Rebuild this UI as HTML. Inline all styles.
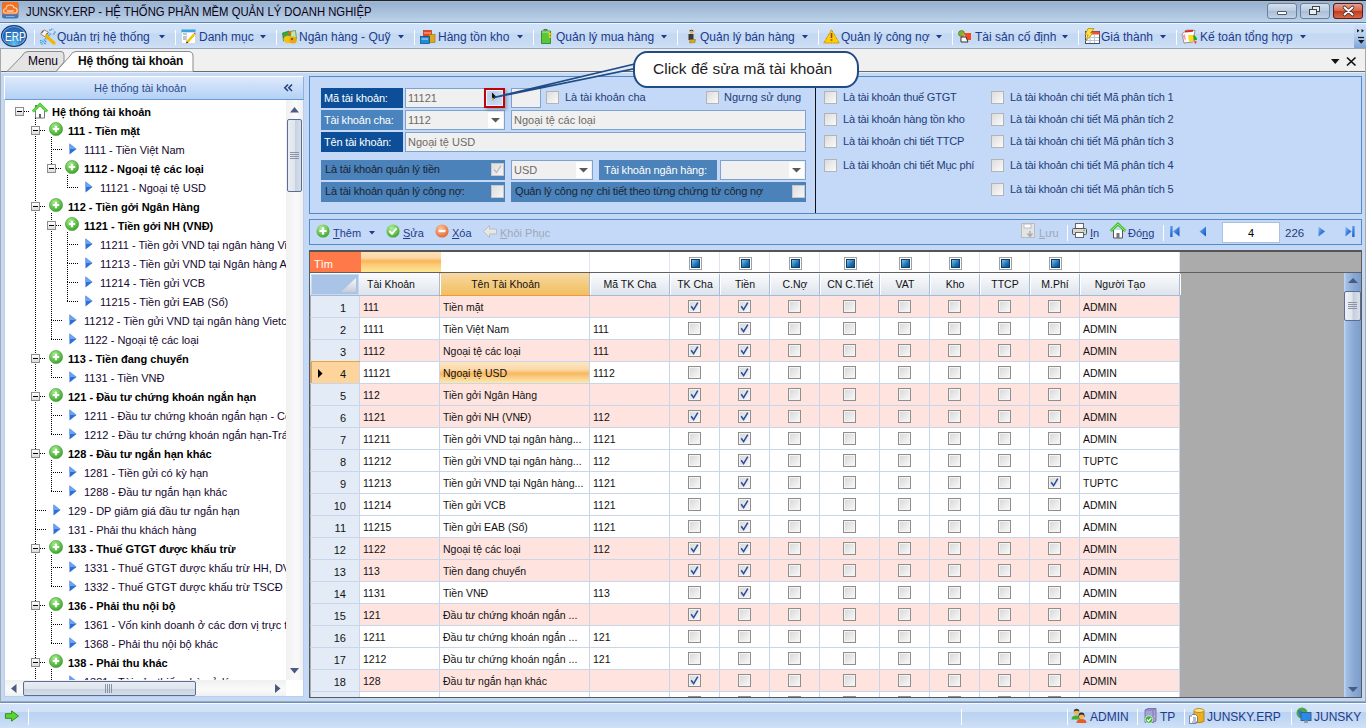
<!DOCTYPE html><html><head><meta charset="utf-8"><style>
*{margin:0;padding:0;box-sizing:border-box}
html,body{width:1366px;height:728px;overflow:hidden;background:#c3d9f6;font-family:"Liberation Sans",sans-serif;font-size:11px;color:#000}
.a{position:absolute}
.t{position:absolute;white-space:nowrap;line-height:1}
svg{position:absolute;overflow:visible}
</style></head><body><div class="a" style="left:0px;top:0px;width:1366px;height:1px;background:#25211f"></div>
<div class="a" style="left:0px;top:1px;width:1366px;height:21px;background:linear-gradient(#a0bbd8 0px,#98b2d1 2px,#bcd2e9 21px)"></div>
<div class="a" style="left:0px;top:22px;width:1366px;height:1px;background:#5a84b6"></div>
<svg style="left:2px;top:2px" width="17" height="17" viewBox="0 0 17 17"><rect x="0" y="0" width="16.5" height="16.5" rx="2.5" fill="#3a78c0"/><path d="M0 2.5 Q0 0 2.5 0 H14 Q16.5 0 16.5 2.5 V12.5 H0 Z" fill="#f27022"/><path d="M3.8 11 Q1.5 11 1.6 8.8 Q1.8 6.6 4 6.8 Q4.3 3 8 3 Q11.2 2.8 12 5.8 Q15 5.6 15.2 8.5 Q15.2 11 12.8 11 Z" fill="none" stroke="#fde0c8" stroke-width="1.1"/><path d="M4.5 8.5 H12 M5 9.5 H11.5" stroke="#fbc8a8" stroke-width="0.8"/><path d="M4 14.5 H12.5" stroke="#9cc0ea" stroke-width="0.8"/></svg>
<div class="t" style="left:26px;top:5px;font-size:13px;transform:scaleX(0.868);transform-origin:0 0;color:#0a0014">JUNSKY.ERP - HỆ THỐNG PHẦN MỀM QUẢN LÝ DOANH NGHIỆP</div>
<div class="a" style="left:1267px;top:3px;width:30px;height:16px;border:1px solid #6d7f98;border-radius:3px;background:linear-gradient(#d4e0ee,#b9cbe0 50%,#a9bdd6 51%,#c2d3e6)"></div>
<div class="a" style="left:1277px;top:11px;width:10px;height:4px;background:#fff;border:1px solid #4a5568;border-radius:1px"></div>
<div class="a" style="left:1300px;top:3px;width:30px;height:16px;border:1px solid #6d7f98;border-radius:3px;background:linear-gradient(#d4e0ee,#b9cbe0 50%,#a9bdd6 51%,#c2d3e6)"></div>
<div class="a" style="left:1312px;top:6px;width:8px;height:6px;border:1.5px solid #444;background:#e8eef6"></div><div class="a" style="left:1309px;top:9px;width:8px;height:6px;border:1.5px solid #444;background:#e8eef6"></div>
<div class="a" style="left:1333px;top:3px;width:30px;height:16px;border:1px solid #6d7f98;border-radius:3px;background:linear-gradient(#e8a090,#d5624a 50%,#c23a1c 51%,#d86a45)"></div>
<svg style="left:1343px;top:6px" width="11" height="10"><path d="M1.5 1.5 L9.5 8.5 M9.5 1.5 L1.5 8.5" stroke="#3a2a2a" stroke-width="3.6" stroke-linecap="round"/><path d="M1.5 1.5 L9.5 8.5 M9.5 1.5 L1.5 8.5" stroke="#fff" stroke-width="2" stroke-linecap="round"/></svg>
<div class="a" style="left:1333px;top:3px;width:30px;height:16px;border:1px solid #5a1a18;border-radius:3px"></div>
<div class="a" style="left:0px;top:23px;width:1366px;height:1px;background:#eef5fd"></div>
<div class="a" style="left:0px;top:24px;width:1366px;height:24px;background:linear-gradient(#d2e3f8 0px,#cddff6 9px,#c3d8f2 10px,#c8dbf3 20px,#d2e2f7 24px)"></div>
<div class="a" style="left:0px;top:48px;width:1366px;height:1px;background:#9aa6b6"></div>
<div class="a" style="left:1px;top:25px;width:26px;height:22px;border-radius:50%;background:radial-gradient(ellipse at 50% 95%,#5cc8f4 0%,#2f78c4 45%,#1a4a94 100%);border:1px solid #1a3a70;box-shadow:inset 0 0 0 1px #7aa6dc"></div>
<div class="t" style="left:5px;top:31px;font-size:12.5px;color:#fff;transform:scaleX(0.8);transform-origin:0 0">ERP</div>
<div class="a" style="left:34px;top:30px;width:1px;height:15px;background:#fafcff"></div>
<div class="t" style="left:57px;top:31px;font-size:12px;color:#1c3b8c">Quản trị hệ thống</div>
<svg style="left:159px;top:35px" width="6" height="4"><path d="M0 0 H6 L3 3.5 Z" fill="#1c3b8c"/></svg>
<div class="a" style="left:175px;top:30px;width:1px;height:15px;background:#fafcff"></div>
<div class="t" style="left:199px;top:31px;font-size:12px;color:#1c3b8c">Danh mục</div>
<svg style="left:260px;top:35px" width="6" height="4"><path d="M0 0 H6 L3 3.5 Z" fill="#1c3b8c"/></svg>
<div class="a" style="left:276px;top:30px;width:1px;height:15px;background:#fafcff"></div>
<div class="t" style="left:299px;top:31px;font-size:12px;color:#1c3b8c">Ngân hàng - Quỹ</div>
<svg style="left:398px;top:35px" width="6" height="4"><path d="M0 0 H6 L3 3.5 Z" fill="#1c3b8c"/></svg>
<div class="a" style="left:414px;top:30px;width:1px;height:15px;background:#fafcff"></div>
<div class="t" style="left:438px;top:31px;font-size:12px;color:#1c3b8c">Hàng tồn kho</div>
<svg style="left:517px;top:35px" width="6" height="4"><path d="M0 0 H6 L3 3.5 Z" fill="#1c3b8c"/></svg>
<div class="a" style="left:533px;top:30px;width:1px;height:15px;background:#fafcff"></div>
<div class="t" style="left:556px;top:31px;font-size:12px;color:#1c3b8c">Quản lý mua hàng</div>
<svg style="left:661px;top:35px" width="6" height="4"><path d="M0 0 H6 L3 3.5 Z" fill="#1c3b8c"/></svg>
<div class="a" style="left:677px;top:30px;width:1px;height:15px;background:#fafcff"></div>
<div class="t" style="left:700px;top:31px;font-size:12px;color:#1c3b8c">Quản lý bán hàng</div>
<svg style="left:802px;top:35px" width="6" height="4"><path d="M0 0 H6 L3 3.5 Z" fill="#1c3b8c"/></svg>
<div class="a" style="left:818px;top:30px;width:1px;height:15px;background:#fafcff"></div>
<div class="t" style="left:841px;top:31px;font-size:12px;color:#1c3b8c">Quản lý công nợ</div>
<svg style="left:936px;top:35px" width="6" height="4"><path d="M0 0 H6 L3 3.5 Z" fill="#1c3b8c"/></svg>
<div class="a" style="left:952px;top:30px;width:1px;height:15px;background:#fafcff"></div>
<div class="t" style="left:975px;top:31px;font-size:12px;color:#1c3b8c">Tài sản cố định</div>
<svg style="left:1062px;top:35px" width="6" height="4"><path d="M0 0 H6 L3 3.5 Z" fill="#1c3b8c"/></svg>
<div class="a" style="left:1078px;top:30px;width:1px;height:15px;background:#fafcff"></div>
<div class="t" style="left:1101px;top:31px;font-size:12px;color:#1c3b8c">Giá thành</div>
<svg style="left:1160px;top:35px" width="6" height="4"><path d="M0 0 H6 L3 3.5 Z" fill="#1c3b8c"/></svg>
<div class="a" style="left:1176px;top:30px;width:1px;height:15px;background:#fafcff"></div>
<div class="t" style="left:1200px;top:31px;font-size:12px;color:#1c3b8c">Kế toán tổng hợp</div>
<svg style="left:1300px;top:35px" width="6" height="4"><path d="M0 0 H6 L3 3.5 Z" fill="#1c3b8c"/></svg>
<svg style="left:40px;top:28px" width="16" height="17" viewBox="0 0 16 17"><path d="M2.5 14 L11 5" stroke="#3aa0f0" stroke-width="2" stroke-dasharray="1.2 0.9"/><path d="M9.5 2.5 Q11 0.8 13.5 1.5 M14.8 3.5 Q15 6 12.5 6.5" fill="none" stroke="#2a96ea" stroke-width="1.6" stroke-dasharray="1.2 0.8"/><path d="M1 12 Q0 15 2.5 16.2 M4.5 16 Q6 14 5.5 12.5" fill="none" stroke="#2a96ea" stroke-width="1.6" stroke-dasharray="1.2 0.8"/><path d="M6.5 8.5 L14 15" stroke="#f2b600" stroke-width="3.2" stroke-linecap="round"/><path d="M0.5 6 L4 1.8 L8.5 4.2 L5 8.8 Z" fill="#f4f4f4" stroke="#7a7a7a" stroke-width="0.8"/><path d="M1.5 4.8 L3.5 2.6" stroke="#8a4a3a" stroke-width="1.2"/><path d="M7.5 4.8 L5.5 7.8" stroke="#333" stroke-width="1"/><path d="M5.5 7 L8 9.5" stroke="#f2b600" stroke-width="3"/></svg>
<svg style="left:181px;top:29px" width="16" height="15" viewBox="0 0 16 15"><rect x="0.5" y="0.5" width="14" height="14" fill="#fff" stroke="#c4ccd8" stroke-width="0.6"/><rect x="0.5" y="0.5" width="14" height="2.8" fill="#3aa2e0"/><path d="M2 5 H5 M2 8 H5 M2 10 H5" stroke="#7a8696" stroke-width="1"/><path d="M5.5 3 V14" stroke="#cbd6e4"/><path d="M6 13.5 L13 5.5" stroke="#f2c400" stroke-width="2.6"/><path d="M12.5 5 L14 3.5 L14.5 5.5 Z" fill="#e02020"/><path d="M5.5 14 L6.5 12.8" stroke="#222" stroke-width="1.2"/></svg>
<svg style="left:282px;top:30px" width="16" height="14" viewBox="0 0 16 14"><path d="M0.5 3 L7 1 L8 9 L1.5 11 Z" fill="#3ca832" stroke="#1f6e1f" stroke-width="0.6"/><path d="M8 1.5 L13.5 0.5 L14.5 9 L9 10 Z" fill="#bfe8a8" stroke="#2a7a2a" stroke-width="0.6"/><path d="M5.5 2 L9.5 1 L9 6 Z" fill="#e86a10"/><ellipse cx="6" cy="9.5" rx="4.5" ry="3.8" fill="#f2c21a"/><ellipse cx="11" cy="10" rx="3.8" ry="3.6" fill="#e8a810"/><circle cx="10" cy="9" r="1" fill="#7a3a0a"/></svg>
<svg style="left:420px;top:30px" width="16" height="14" viewBox="0 0 16 14"><rect x="3.5" y="0.5" width="8" height="6" fill="#f0401a" stroke="#a82a10" stroke-width="0.6"/><path d="M4 3 H11" stroke="#ffc0b0"/><rect x="9" y="4.5" width="6" height="8" fill="#e0a818" stroke="#9a7010" stroke-width="0.6"/><rect x="0.5" y="6.5" width="9" height="7" fill="#1e8ae0" stroke="#0a4a6a" stroke-width="0.7"/><path d="M1.5 9 H8" stroke="#bfe6ff"/></svg>
<svg style="left:541px;top:29px" width="11" height="15" viewBox="0 0 11 15"><rect x="2.5" y="0" width="4" height="1.5" fill="#666"/><path d="M0.5 2 H9.5 V14.5 H0.5 Z" fill="#58c838" stroke="#2a7a1a" stroke-width="0.8"/><path d="M1 3 H9" stroke="#b8f0a0"/><path d="M7.5 3.5 L10.5 5 L8 6.5 L10 8 L8 9" fill="#f8d820" stroke="#f0c000" stroke-width="0.8"/></svg>
<svg style="left:688px;top:30px" width="9" height="14" viewBox="0 0 9 14"><circle cx="3.5" cy="2" r="1.8" fill="#f0b040"/><path d="M1.5 0.8 Q3.5 -0.5 5.5 1" stroke="#333" fill="none" stroke-width="1"/><rect x="0.5" y="4" width="5" height="6" fill="#3a3a3a"/><path d="M2 9.5 H7.5 L7 12.5 L1.5 13 Z" fill="#e0a810" stroke="#8a6a10" stroke-width="0.5"/></svg>
<svg style="left:823px;top:29px" width="17" height="15" viewBox="0 0 17 15"><path d="M8.5 0.8 L16.2 14 H0.8 Z" fill="#ffd000" stroke="#d07a00" stroke-width="1" stroke-dasharray="1 0.6"/><path d="M8.5 4 V9" stroke="#8a4a20" stroke-width="1.6"/><ellipse cx="8.5" cy="11" rx="1.2" ry="0.8" fill="#8a3a10"/></svg>
<svg style="left:958px;top:30px" width="14" height="13" viewBox="0 0 14 13"><circle cx="3.5" cy="3.5" r="3" fill="#80b030" stroke="#3a6a10" stroke-width="0.6"/><path d="M6 3 H13 V10 H9 Z" fill="#f04a20"/><path d="M3 7 L8 7 L10 12 L3 12 Z" fill="#fff" stroke="#222" stroke-width="0.9"/><circle cx="5" cy="4.5" r="1.3" fill="#d89a20"/></svg>
<svg style="left:1083px;top:28px" width="17" height="16" viewBox="0 0 17 16"><rect x="2.5" y="3.5" width="14" height="12" fill="#fff" stroke="#2a3e58" stroke-width="0.9"/><rect x="2.5" y="3.5" width="14" height="3" fill="#f05030"/><path d="M7 6.5 V15 M11.5 6.5 V15 M2.5 9.5 H16 M2.5 12.5 H16" stroke="#b8c4d8"/><path d="M5 0.5 H11 L7.5 5 H10 L3 13 L5 7 H2 Z" fill="#ffe040" stroke="#b08000" stroke-width="0.7"/></svg>
<svg style="left:1181px;top:29px" width="17" height="15" viewBox="0 0 17 15"><path d="M1 5 L6 1 L14 1.5 L12 13 L3 14 Z" fill="#fff" stroke="#555" stroke-width="0.6"/><path d="M4 2.5 L12 1.8" stroke="#e02a20" stroke-width="2"/><path d="M1 7 L4 5 L5 12 Z" fill="#ff9a9a"/><path d="M7 6 L13 6 L12 13 L8 13 Z" fill="#ffd820"/><path d="M12 6 Q16 7 16 11 L13 11 Z" fill="#20a820"/><path d="M13 11 L16 13 L14 15 Z" fill="#f04020"/></svg>
<div class="a" style="left:1354px;top:24px;width:12px;height:24px;background:linear-gradient(#d0e2f8,#b4cdee 50%,#7ea4d8)"></div>
<svg style="left:1357px;top:29px" width="9" height="16"><path d="M0 0 L2.5 1.8 L0 3.6 Z M4.5 0 L7 1.8 L4.5 3.6 Z" fill="#1a1a1a"/><path d="M1 8.5 H7" stroke="#1a1a1a" stroke-width="1.2"/><path d="M1 11 H7.5 L4.2 14.8 Z" fill="#1a1a1a"/></svg>
<div class="a" style="left:0px;top:49px;width:1366px;height:22px;background:#f0f0f0"></div>
<div class="a" style="left:0px;top:71px;width:1366px;height:1px;background:#6b6b6b"></div>
<div class="a" style="left:0px;top:72px;width:1366px;height:1px;background:#e4ecf6"></div>
<svg style="left:0px;top:50px" width="200" height="22"><path d="M7 21.5 L22 6 Q24 1.5 28 1.5 L61 1.5 Q64 1.5 64 5 L64 12 L56 21.5 Z" fill="#e4e4e4" stroke="#8a8a8a"/><path d="M56 21.5 L70 6 Q72 1.5 76 1.5 L188 1.5 Q193 1.5 193 6 L193 21.5" fill="#fff" stroke="#8a8a8a"/></svg>
<div class="t" style="left:28px;top:55px;font-size:12px;color:#0a0014">Menu</div>
<div class="t" style="left:78px;top:55px;font-size:12px;font-weight:bold;letter-spacing:-0.15px;color:#0a0a0a">Hệ thống tài khoản</div>
<svg style="left:1331px;top:59px" width="10" height="6"><path d="M0 0 H8.5 L4.25 5 Z" fill="#111"/></svg>
<svg style="left:1346px;top:57px" width="11" height="9"><path d="M1 0.5 L9.5 8.5 M9.5 0.5 L1 8.5" stroke="#111" stroke-width="1.7"/></svg>
<div class="a" style="left:0px;top:49px;width:1px;height:653px;background:#a8a8a8"></div>
<div class="a" style="left:1365px;top:49px;width:1px;height:653px;background:#a8a8a8"></div>
<div class="a" style="left:4px;top:76px;width:300px;height:24px;background:linear-gradient(#dde9fb,#b4d1f6);border-top:1px solid #fff;border-left:1px solid #fff;border-bottom:1px solid #6b9ad3;border-right:1px solid #8db2e0"></div>
<div class="t" style="left:94px;top:83px;font-size:11px;color:#2a4c8c">Hệ thống tài khoản</div>
<svg style="left:284px;top:84px" width="9" height="8"><path d="M4 0.5 L0.8 3.8 L4 7 M8 0.5 L4.8 3.8 L8 7" fill="none" stroke="#24437e" stroke-width="1.6"/></svg>
<div class="a" style="left:4px;top:100px;width:300px;height:597px;background:#fff;border-left:1px solid #b8d0ee;border-right:1px solid #b8d0ee;border-bottom:1px solid #b8d0ee"></div>
<div class="a" style="left:286px;top:100px;width:17px;height:580px;background:linear-gradient(90deg,#f0f0f0,#fafafa 60%,#f0f0f0)"></div>
<svg style="left:290px;top:107px" width="10" height="6"><path d="M0 5.5 L4.5 0 L9 5.5 Z" fill="#4b5a80"/></svg>
<svg style="left:290px;top:668px" width="10" height="6"><path d="M0 0 L4.5 5.5 L9 0 Z" fill="#4b5a80"/></svg>
<div class="a" style="left:287px;top:119px;width:15px;height:73px;border:1px solid #5b6d95;border-radius:2px;background:linear-gradient(90deg,#e9edf3,#dfe5ee 50%,#c8d2df 55%,#d6dee8)"></div>
<div class="a" style="left:290px;top:152px;width:9px;height:1px;background:#8a94a6"></div>
<div class="a" style="left:290px;top:154px;width:9px;height:1px;background:#8a94a6"></div>
<div class="a" style="left:290px;top:156px;width:9px;height:1px;background:#8a94a6"></div>
<div class="a" style="left:290px;top:158px;width:9px;height:1px;background:#8a94a6"></div>
<div class="a" style="left:5px;top:680px;width:281px;height:16px;background:linear-gradient(#f0f0f0,#fafafa 60%,#f0f0f0)"></div>
<svg style="left:11px;top:684px" width="6" height="10"><path d="M5.5 0 L0 4.5 L5.5 9 Z" fill="#4b5a80"/></svg>
<svg style="left:275px;top:684px" width="6" height="10"><path d="M0 0 L5.5 4.5 L0 9 Z" fill="#4b5a80"/></svg>
<div class="a" style="left:23px;top:681px;width:173px;height:15px;border:1px solid #5b6d95;border-radius:2px;background:linear-gradient(#e9edf3,#dfe5ee 50%,#c8d2df 55%,#d6dee8)"></div>
<div class="a" style="left:105px;top:684px;width:1px;height:9px;background:#8a94a6"></div>
<div class="a" style="left:107px;top:684px;width:1px;height:9px;background:#8a94a6"></div>
<div class="a" style="left:109px;top:684px;width:1px;height:9px;background:#8a94a6"></div>
<div class="a" style="left:111px;top:684px;width:1px;height:9px;background:#8a94a6"></div>
<div class="a" style="left:286px;top:680px;width:17px;height:16px;background:#fff"></div>
<div class="a" style="left:5px;top:100px;width:281px;height:580px;overflow:hidden">
<div class="a" style="left:19px;top:11px;width:6px;height:1px;background-image:repeating-linear-gradient(90deg,#000 0 1px,transparent 1px 2px)"></div>
<div class="a" style="left:31px;top:30px;width:10px;height:1px;background-image:repeating-linear-gradient(90deg,#000 0 1px,transparent 1px 2px)"></div>
<div class="a" style="left:30px;top:30px;width:1px;height:77px;background-image:repeating-linear-gradient(180deg,#000 0 1px,transparent 1px 2px)"></div>
<div class="a" style="left:46px;top:49px;width:11px;height:1px;background-image:repeating-linear-gradient(90deg,#000 0 1px,transparent 1px 2px)"></div>
<div class="a" style="left:46px;top:49px;width:1px;height:20px;background-image:repeating-linear-gradient(180deg,#000 0 1px,transparent 1px 2px)"></div>
<div class="a" style="left:47px;top:68px;width:10px;height:1px;background-image:repeating-linear-gradient(90deg,#000 0 1px,transparent 1px 2px)"></div>
<div class="a" style="left:62px;top:87px;width:11px;height:1px;background-image:repeating-linear-gradient(90deg,#000 0 1px,transparent 1px 2px)"></div>
<div class="a" style="left:31px;top:106px;width:10px;height:1px;background-image:repeating-linear-gradient(90deg,#000 0 1px,transparent 1px 2px)"></div>
<div class="a" style="left:30px;top:106px;width:1px;height:153px;background-image:repeating-linear-gradient(180deg,#000 0 1px,transparent 1px 2px)"></div>
<div class="a" style="left:47px;top:125px;width:10px;height:1px;background-image:repeating-linear-gradient(90deg,#000 0 1px,transparent 1px 2px)"></div>
<div class="a" style="left:46px;top:125px;width:1px;height:96px;background-image:repeating-linear-gradient(180deg,#000 0 1px,transparent 1px 2px)"></div>
<div class="a" style="left:62px;top:144px;width:11px;height:1px;background-image:repeating-linear-gradient(90deg,#000 0 1px,transparent 1px 2px)"></div>
<div class="a" style="left:62px;top:144px;width:1px;height:20px;background-image:repeating-linear-gradient(180deg,#000 0 1px,transparent 1px 2px)"></div>
<div class="a" style="left:62px;top:163px;width:11px;height:1px;background-image:repeating-linear-gradient(90deg,#000 0 1px,transparent 1px 2px)"></div>
<div class="a" style="left:62px;top:163px;width:1px;height:20px;background-image:repeating-linear-gradient(180deg,#000 0 1px,transparent 1px 2px)"></div>
<div class="a" style="left:62px;top:182px;width:11px;height:1px;background-image:repeating-linear-gradient(90deg,#000 0 1px,transparent 1px 2px)"></div>
<div class="a" style="left:62px;top:182px;width:1px;height:20px;background-image:repeating-linear-gradient(180deg,#000 0 1px,transparent 1px 2px)"></div>
<div class="a" style="left:62px;top:201px;width:11px;height:1px;background-image:repeating-linear-gradient(90deg,#000 0 1px,transparent 1px 2px)"></div>
<div class="a" style="left:46px;top:220px;width:11px;height:1px;background-image:repeating-linear-gradient(90deg,#000 0 1px,transparent 1px 2px)"></div>
<div class="a" style="left:46px;top:220px;width:1px;height:20px;background-image:repeating-linear-gradient(180deg,#000 0 1px,transparent 1px 2px)"></div>
<div class="a" style="left:46px;top:239px;width:11px;height:1px;background-image:repeating-linear-gradient(90deg,#000 0 1px,transparent 1px 2px)"></div>
<div class="a" style="left:31px;top:258px;width:10px;height:1px;background-image:repeating-linear-gradient(90deg,#000 0 1px,transparent 1px 2px)"></div>
<div class="a" style="left:30px;top:258px;width:1px;height:39px;background-image:repeating-linear-gradient(180deg,#000 0 1px,transparent 1px 2px)"></div>
<div class="a" style="left:46px;top:277px;width:11px;height:1px;background-image:repeating-linear-gradient(90deg,#000 0 1px,transparent 1px 2px)"></div>
<div class="a" style="left:31px;top:296px;width:10px;height:1px;background-image:repeating-linear-gradient(90deg,#000 0 1px,transparent 1px 2px)"></div>
<div class="a" style="left:30px;top:296px;width:1px;height:58px;background-image:repeating-linear-gradient(180deg,#000 0 1px,transparent 1px 2px)"></div>
<div class="a" style="left:46px;top:315px;width:11px;height:1px;background-image:repeating-linear-gradient(90deg,#000 0 1px,transparent 1px 2px)"></div>
<div class="a" style="left:46px;top:315px;width:1px;height:20px;background-image:repeating-linear-gradient(180deg,#000 0 1px,transparent 1px 2px)"></div>
<div class="a" style="left:46px;top:334px;width:11px;height:1px;background-image:repeating-linear-gradient(90deg,#000 0 1px,transparent 1px 2px)"></div>
<div class="a" style="left:31px;top:353px;width:10px;height:1px;background-image:repeating-linear-gradient(90deg,#000 0 1px,transparent 1px 2px)"></div>
<div class="a" style="left:30px;top:353px;width:1px;height:58px;background-image:repeating-linear-gradient(180deg,#000 0 1px,transparent 1px 2px)"></div>
<div class="a" style="left:46px;top:372px;width:11px;height:1px;background-image:repeating-linear-gradient(90deg,#000 0 1px,transparent 1px 2px)"></div>
<div class="a" style="left:46px;top:372px;width:1px;height:20px;background-image:repeating-linear-gradient(180deg,#000 0 1px,transparent 1px 2px)"></div>
<div class="a" style="left:46px;top:391px;width:11px;height:1px;background-image:repeating-linear-gradient(90deg,#000 0 1px,transparent 1px 2px)"></div>
<div class="a" style="left:30px;top:410px;width:11px;height:1px;background-image:repeating-linear-gradient(90deg,#000 0 1px,transparent 1px 2px)"></div>
<div class="a" style="left:30px;top:410px;width:1px;height:20px;background-image:repeating-linear-gradient(180deg,#000 0 1px,transparent 1px 2px)"></div>
<div class="a" style="left:30px;top:429px;width:11px;height:1px;background-image:repeating-linear-gradient(90deg,#000 0 1px,transparent 1px 2px)"></div>
<div class="a" style="left:30px;top:429px;width:1px;height:20px;background-image:repeating-linear-gradient(180deg,#000 0 1px,transparent 1px 2px)"></div>
<div class="a" style="left:31px;top:448px;width:10px;height:1px;background-image:repeating-linear-gradient(90deg,#000 0 1px,transparent 1px 2px)"></div>
<div class="a" style="left:30px;top:448px;width:1px;height:58px;background-image:repeating-linear-gradient(180deg,#000 0 1px,transparent 1px 2px)"></div>
<div class="a" style="left:46px;top:467px;width:11px;height:1px;background-image:repeating-linear-gradient(90deg,#000 0 1px,transparent 1px 2px)"></div>
<div class="a" style="left:46px;top:467px;width:1px;height:20px;background-image:repeating-linear-gradient(180deg,#000 0 1px,transparent 1px 2px)"></div>
<div class="a" style="left:46px;top:486px;width:11px;height:1px;background-image:repeating-linear-gradient(90deg,#000 0 1px,transparent 1px 2px)"></div>
<div class="a" style="left:31px;top:505px;width:10px;height:1px;background-image:repeating-linear-gradient(90deg,#000 0 1px,transparent 1px 2px)"></div>
<div class="a" style="left:30px;top:505px;width:1px;height:58px;background-image:repeating-linear-gradient(180deg,#000 0 1px,transparent 1px 2px)"></div>
<div class="a" style="left:46px;top:524px;width:11px;height:1px;background-image:repeating-linear-gradient(90deg,#000 0 1px,transparent 1px 2px)"></div>
<div class="a" style="left:46px;top:524px;width:1px;height:20px;background-image:repeating-linear-gradient(180deg,#000 0 1px,transparent 1px 2px)"></div>
<div class="a" style="left:46px;top:543px;width:11px;height:1px;background-image:repeating-linear-gradient(90deg,#000 0 1px,transparent 1px 2px)"></div>
<div class="a" style="left:31px;top:562px;width:10px;height:1px;background-image:repeating-linear-gradient(90deg,#000 0 1px,transparent 1px 2px)"></div>
<div class="a" style="left:30px;top:562px;width:1px;height:77px;background-image:repeating-linear-gradient(180deg,#000 0 1px,transparent 1px 2px)"></div>
<div class="a" style="left:46px;top:581px;width:11px;height:1px;background-image:repeating-linear-gradient(90deg,#000 0 1px,transparent 1px 2px)"></div>
<div class="a" style="left:46px;top:581px;width:1px;height:20px;background-image:repeating-linear-gradient(180deg,#000 0 1px,transparent 1px 2px)"></div>
<div class="a" style="left:46px;top:600px;width:11px;height:1px;background-image:repeating-linear-gradient(90deg,#000 0 1px,transparent 1px 2px)"></div>
<div class="a" style="left:46px;top:600px;width:1px;height:20px;background-image:repeating-linear-gradient(180deg,#000 0 1px,transparent 1px 2px)"></div>
<div class="a" style="left:46px;top:619px;width:11px;height:1px;background-image:repeating-linear-gradient(90deg,#000 0 1px,transparent 1px 2px)"></div>
<div class="a" style="left:30px;top:638px;width:11px;height:1px;background-image:repeating-linear-gradient(90deg,#000 0 1px,transparent 1px 2px)"></div>
<div class="a" style="left:30px;top:638px;width:1px;height:20px;background-image:repeating-linear-gradient(180deg,#000 0 1px,transparent 1px 2px)"></div>
<div class="a" style="left:30px;top:657px;width:11px;height:1px;background-image:repeating-linear-gradient(90deg,#000 0 1px,transparent 1px 2px)"></div>
<div class="a" style="left:10px;top:7px;width:9px;height:9px;border:1px solid #8c8c8c;background:linear-gradient(#fff,#dcdcdc)"></div>
<div class="a" style="left:12px;top:11px;width:5px;height:1px;background:#000"></div>
<svg style="left:27px;top:3px" width="16" height="16" viewBox="0 0 16 16"><rect x="3" y="2" width="2" height="4" fill="#777"/><path d="M3.5 8 V15 H12.5 V8" fill="#fff" stroke="#777"/><rect x="7" y="11" width="2" height="4" fill="#666"/><path d="M0.8 8.5 L8 1.5 L15.2 8.5" fill="none" stroke="#3fbf2a" stroke-width="2.8" stroke-linejoin="miter"/><path d="M0.8 8.5 L8 1.5 L15.2 8.5" fill="none" stroke="#8ef070" stroke-width="1"/></svg>
<div class="t" style="left:47px;top:7px;font-size:11px;font-weight:bold;color:#000">Hệ thống tài khoản</div>
<div class="a" style="left:30px;top:18px;width:1px;height:13px;background-image:repeating-linear-gradient(180deg,#000 0 1px,transparent 1px 2px)"></div>
<div class="a" style="left:26px;top:26px;width:9px;height:9px;border:1px solid #8c8c8c;background:linear-gradient(#fff,#dcdcdc)"></div>
<div class="a" style="left:28px;top:30px;width:5px;height:1px;background:#000"></div>
<svg style="left:44px;top:22px" width="14" height="14" viewBox="0 0 14 14"><defs><radialGradient id="g1" cx="0.4" cy="0.3" r="0.7"><stop offset="0" stop-color="#a6ec8a"/><stop offset="1" stop-color="#3aa72a"/></radialGradient></defs><circle cx="7" cy="7" r="6.6" fill="url(#g1)" stroke="#4a9a3a" stroke-width="0.6"/><path d="M7 3.8 V10.2 M3.8 7 H10.2" stroke="#fff" stroke-width="2.2"/></svg>
<div class="t" style="left:63px;top:26px;font-size:11px;font-weight:bold;color:#000">111 - Tiền mặt</div>
<div class="a" style="left:46px;top:37px;width:1px;height:13px;background-image:repeating-linear-gradient(180deg,#000 0 1px,transparent 1px 2px)"></div>
<svg style="left:64px;top:43px" width="8" height="12" viewBox="0 0 8 12"><path d="M0.5 0.5 L7.5 6 L0.5 11.5 Z" fill="#2e6fd6"/><path d="M0.5 0.5 L7.5 6 L0.5 6 Z" fill="#6aa2ef"/></svg>
<div class="t" style="left:79px;top:45px;font-size:11px;color:#14062e">1111 - Tiền Việt Nam</div>
<div class="a" style="left:42px;top:64px;width:9px;height:9px;border:1px solid #8c8c8c;background:linear-gradient(#fff,#dcdcdc)"></div>
<div class="a" style="left:44px;top:68px;width:5px;height:1px;background:#000"></div>
<svg style="left:60px;top:60px" width="14" height="14" viewBox="0 0 14 14"><defs><radialGradient id="g3" cx="0.4" cy="0.3" r="0.7"><stop offset="0" stop-color="#a6ec8a"/><stop offset="1" stop-color="#3aa72a"/></radialGradient></defs><circle cx="7" cy="7" r="6.6" fill="url(#g3)" stroke="#4a9a3a" stroke-width="0.6"/><path d="M7 3.8 V10.2 M3.8 7 H10.2" stroke="#fff" stroke-width="2.2"/></svg>
<div class="t" style="left:79px;top:64px;font-size:11px;font-weight:bold;color:#000">1112 - Ngoại tệ các loại</div>
<div class="a" style="left:62px;top:75px;width:1px;height:13px;background-image:repeating-linear-gradient(180deg,#000 0 1px,transparent 1px 2px)"></div>
<svg style="left:80px;top:81px" width="8" height="12" viewBox="0 0 8 12"><path d="M0.5 0.5 L7.5 6 L0.5 11.5 Z" fill="#2e6fd6"/><path d="M0.5 0.5 L7.5 6 L0.5 6 Z" fill="#6aa2ef"/></svg>
<div class="t" style="left:95px;top:83px;font-size:11px;color:#14062e">11121 - Ngoại tệ USD</div>
<div class="a" style="left:26px;top:102px;width:9px;height:9px;border:1px solid #8c8c8c;background:linear-gradient(#fff,#dcdcdc)"></div>
<div class="a" style="left:28px;top:106px;width:5px;height:1px;background:#000"></div>
<svg style="left:44px;top:98px" width="14" height="14" viewBox="0 0 14 14"><defs><radialGradient id="g5" cx="0.4" cy="0.3" r="0.7"><stop offset="0" stop-color="#a6ec8a"/><stop offset="1" stop-color="#3aa72a"/></radialGradient></defs><circle cx="7" cy="7" r="6.6" fill="url(#g5)" stroke="#4a9a3a" stroke-width="0.6"/><path d="M7 3.8 V10.2 M3.8 7 H10.2" stroke="#fff" stroke-width="2.2"/></svg>
<div class="t" style="left:63px;top:102px;font-size:11px;font-weight:bold;color:#000">112 - Tiền gởi Ngân Hàng</div>
<div class="a" style="left:46px;top:113px;width:1px;height:13px;background-image:repeating-linear-gradient(180deg,#000 0 1px,transparent 1px 2px)"></div>
<div class="a" style="left:42px;top:121px;width:9px;height:9px;border:1px solid #8c8c8c;background:linear-gradient(#fff,#dcdcdc)"></div>
<div class="a" style="left:44px;top:125px;width:5px;height:1px;background:#000"></div>
<svg style="left:60px;top:117px" width="14" height="14" viewBox="0 0 14 14"><defs><radialGradient id="g6" cx="0.4" cy="0.3" r="0.7"><stop offset="0" stop-color="#a6ec8a"/><stop offset="1" stop-color="#3aa72a"/></radialGradient></defs><circle cx="7" cy="7" r="6.6" fill="url(#g6)" stroke="#4a9a3a" stroke-width="0.6"/><path d="M7 3.8 V10.2 M3.8 7 H10.2" stroke="#fff" stroke-width="2.2"/></svg>
<div class="t" style="left:79px;top:121px;font-size:11px;font-weight:bold;color:#000">1121 - Tiền gởi NH (VNĐ)</div>
<div class="a" style="left:62px;top:132px;width:1px;height:13px;background-image:repeating-linear-gradient(180deg,#000 0 1px,transparent 1px 2px)"></div>
<svg style="left:80px;top:138px" width="8" height="12" viewBox="0 0 8 12"><path d="M0.5 0.5 L7.5 6 L0.5 11.5 Z" fill="#2e6fd6"/><path d="M0.5 0.5 L7.5 6 L0.5 6 Z" fill="#6aa2ef"/></svg>
<div class="t" style="left:95px;top:140px;font-size:11px;color:#14062e">11211 - Tiền gởi VND tại ngân hàng Vietcombank</div>
<svg style="left:80px;top:157px" width="8" height="12" viewBox="0 0 8 12"><path d="M0.5 0.5 L7.5 6 L0.5 11.5 Z" fill="#2e6fd6"/><path d="M0.5 0.5 L7.5 6 L0.5 6 Z" fill="#6aa2ef"/></svg>
<div class="t" style="left:95px;top:159px;font-size:11px;color:#14062e">11213 - Tiền gửi VND tại Ngân hàng ACB</div>
<svg style="left:80px;top:176px" width="8" height="12" viewBox="0 0 8 12"><path d="M0.5 0.5 L7.5 6 L0.5 11.5 Z" fill="#2e6fd6"/><path d="M0.5 0.5 L7.5 6 L0.5 6 Z" fill="#6aa2ef"/></svg>
<div class="t" style="left:95px;top:178px;font-size:11px;color:#14062e">11214 - Tiền gửi VCB</div>
<svg style="left:80px;top:195px" width="8" height="12" viewBox="0 0 8 12"><path d="M0.5 0.5 L7.5 6 L0.5 11.5 Z" fill="#2e6fd6"/><path d="M0.5 0.5 L7.5 6 L0.5 6 Z" fill="#6aa2ef"/></svg>
<div class="t" style="left:95px;top:197px;font-size:11px;color:#14062e">11215 - Tiền gửi EAB (Sổ)</div>
<svg style="left:64px;top:214px" width="8" height="12" viewBox="0 0 8 12"><path d="M0.5 0.5 L7.5 6 L0.5 11.5 Z" fill="#2e6fd6"/><path d="M0.5 0.5 L7.5 6 L0.5 6 Z" fill="#6aa2ef"/></svg>
<div class="t" style="left:79px;top:216px;font-size:11px;color:#14062e">11212 - Tiền gửi VND tại ngân hàng Vietcombank</div>
<svg style="left:64px;top:233px" width="8" height="12" viewBox="0 0 8 12"><path d="M0.5 0.5 L7.5 6 L0.5 11.5 Z" fill="#2e6fd6"/><path d="M0.5 0.5 L7.5 6 L0.5 6 Z" fill="#6aa2ef"/></svg>
<div class="t" style="left:79px;top:235px;font-size:11px;color:#14062e">1122 - Ngoại tệ các loại</div>
<div class="a" style="left:26px;top:254px;width:9px;height:9px;border:1px solid #8c8c8c;background:linear-gradient(#fff,#dcdcdc)"></div>
<div class="a" style="left:28px;top:258px;width:5px;height:1px;background:#000"></div>
<svg style="left:44px;top:250px" width="14" height="14" viewBox="0 0 14 14"><defs><radialGradient id="g13" cx="0.4" cy="0.3" r="0.7"><stop offset="0" stop-color="#a6ec8a"/><stop offset="1" stop-color="#3aa72a"/></radialGradient></defs><circle cx="7" cy="7" r="6.6" fill="url(#g13)" stroke="#4a9a3a" stroke-width="0.6"/><path d="M7 3.8 V10.2 M3.8 7 H10.2" stroke="#fff" stroke-width="2.2"/></svg>
<div class="t" style="left:63px;top:254px;font-size:11px;font-weight:bold;color:#000">113 - Tiền đang chuyển</div>
<div class="a" style="left:46px;top:265px;width:1px;height:13px;background-image:repeating-linear-gradient(180deg,#000 0 1px,transparent 1px 2px)"></div>
<svg style="left:64px;top:271px" width="8" height="12" viewBox="0 0 8 12"><path d="M0.5 0.5 L7.5 6 L0.5 11.5 Z" fill="#2e6fd6"/><path d="M0.5 0.5 L7.5 6 L0.5 6 Z" fill="#6aa2ef"/></svg>
<div class="t" style="left:79px;top:273px;font-size:11px;color:#14062e">1131 - Tiền VNĐ</div>
<div class="a" style="left:26px;top:292px;width:9px;height:9px;border:1px solid #8c8c8c;background:linear-gradient(#fff,#dcdcdc)"></div>
<div class="a" style="left:28px;top:296px;width:5px;height:1px;background:#000"></div>
<svg style="left:44px;top:288px" width="14" height="14" viewBox="0 0 14 14"><defs><radialGradient id="g15" cx="0.4" cy="0.3" r="0.7"><stop offset="0" stop-color="#a6ec8a"/><stop offset="1" stop-color="#3aa72a"/></radialGradient></defs><circle cx="7" cy="7" r="6.6" fill="url(#g15)" stroke="#4a9a3a" stroke-width="0.6"/><path d="M7 3.8 V10.2 M3.8 7 H10.2" stroke="#fff" stroke-width="2.2"/></svg>
<div class="t" style="left:63px;top:292px;font-size:11px;font-weight:bold;color:#000">121 - Đầu tư chứng khoán ngắn hạn</div>
<div class="a" style="left:46px;top:303px;width:1px;height:13px;background-image:repeating-linear-gradient(180deg,#000 0 1px,transparent 1px 2px)"></div>
<svg style="left:64px;top:309px" width="8" height="12" viewBox="0 0 8 12"><path d="M0.5 0.5 L7.5 6 L0.5 11.5 Z" fill="#2e6fd6"/><path d="M0.5 0.5 L7.5 6 L0.5 6 Z" fill="#6aa2ef"/></svg>
<div class="t" style="left:79px;top:311px;font-size:11px;color:#14062e">1211 - Đầu tư chứng khoán ngắn hạn - Cổ phiếu</div>
<svg style="left:64px;top:328px" width="8" height="12" viewBox="0 0 8 12"><path d="M0.5 0.5 L7.5 6 L0.5 11.5 Z" fill="#2e6fd6"/><path d="M0.5 0.5 L7.5 6 L0.5 6 Z" fill="#6aa2ef"/></svg>
<div class="t" style="left:79px;top:330px;font-size:11px;color:#14062e">1212 - Đầu tư chứng khoán ngắn hạn-Trái phiếu</div>
<div class="a" style="left:26px;top:349px;width:9px;height:9px;border:1px solid #8c8c8c;background:linear-gradient(#fff,#dcdcdc)"></div>
<div class="a" style="left:28px;top:353px;width:5px;height:1px;background:#000"></div>
<svg style="left:44px;top:345px" width="14" height="14" viewBox="0 0 14 14"><defs><radialGradient id="g18" cx="0.4" cy="0.3" r="0.7"><stop offset="0" stop-color="#a6ec8a"/><stop offset="1" stop-color="#3aa72a"/></radialGradient></defs><circle cx="7" cy="7" r="6.6" fill="url(#g18)" stroke="#4a9a3a" stroke-width="0.6"/><path d="M7 3.8 V10.2 M3.8 7 H10.2" stroke="#fff" stroke-width="2.2"/></svg>
<div class="t" style="left:63px;top:349px;font-size:11px;font-weight:bold;color:#000">128 - Đầu tư ngắn hạn khác</div>
<div class="a" style="left:46px;top:360px;width:1px;height:13px;background-image:repeating-linear-gradient(180deg,#000 0 1px,transparent 1px 2px)"></div>
<svg style="left:64px;top:366px" width="8" height="12" viewBox="0 0 8 12"><path d="M0.5 0.5 L7.5 6 L0.5 11.5 Z" fill="#2e6fd6"/><path d="M0.5 0.5 L7.5 6 L0.5 6 Z" fill="#6aa2ef"/></svg>
<div class="t" style="left:79px;top:368px;font-size:11px;color:#14062e">1281 - Tiền gửi có kỳ hạn</div>
<svg style="left:64px;top:385px" width="8" height="12" viewBox="0 0 8 12"><path d="M0.5 0.5 L7.5 6 L0.5 11.5 Z" fill="#2e6fd6"/><path d="M0.5 0.5 L7.5 6 L0.5 6 Z" fill="#6aa2ef"/></svg>
<div class="t" style="left:79px;top:387px;font-size:11px;color:#14062e">1288 - Đầu tư ngắn hạn khác</div>
<svg style="left:48px;top:404px" width="8" height="12" viewBox="0 0 8 12"><path d="M0.5 0.5 L7.5 6 L0.5 11.5 Z" fill="#2e6fd6"/><path d="M0.5 0.5 L7.5 6 L0.5 6 Z" fill="#6aa2ef"/></svg>
<div class="t" style="left:63px;top:406px;font-size:11px;color:#14062e">129 - DP giảm giá đầu tư ngắn hạn</div>
<svg style="left:48px;top:423px" width="8" height="12" viewBox="0 0 8 12"><path d="M0.5 0.5 L7.5 6 L0.5 11.5 Z" fill="#2e6fd6"/><path d="M0.5 0.5 L7.5 6 L0.5 6 Z" fill="#6aa2ef"/></svg>
<div class="t" style="left:63px;top:425px;font-size:11px;color:#14062e">131 - Phải thu khách hàng</div>
<div class="a" style="left:26px;top:444px;width:9px;height:9px;border:1px solid #8c8c8c;background:linear-gradient(#fff,#dcdcdc)"></div>
<div class="a" style="left:28px;top:448px;width:5px;height:1px;background:#000"></div>
<svg style="left:44px;top:440px" width="14" height="14" viewBox="0 0 14 14"><defs><radialGradient id="g23" cx="0.4" cy="0.3" r="0.7"><stop offset="0" stop-color="#a6ec8a"/><stop offset="1" stop-color="#3aa72a"/></radialGradient></defs><circle cx="7" cy="7" r="6.6" fill="url(#g23)" stroke="#4a9a3a" stroke-width="0.6"/><path d="M7 3.8 V10.2 M3.8 7 H10.2" stroke="#fff" stroke-width="2.2"/></svg>
<div class="t" style="left:63px;top:444px;font-size:11px;font-weight:bold;color:#000">133 - Thuế GTGT được khấu trừ</div>
<div class="a" style="left:46px;top:455px;width:1px;height:13px;background-image:repeating-linear-gradient(180deg,#000 0 1px,transparent 1px 2px)"></div>
<svg style="left:64px;top:461px" width="8" height="12" viewBox="0 0 8 12"><path d="M0.5 0.5 L7.5 6 L0.5 11.5 Z" fill="#2e6fd6"/><path d="M0.5 0.5 L7.5 6 L0.5 6 Z" fill="#6aa2ef"/></svg>
<div class="t" style="left:79px;top:463px;font-size:11px;color:#14062e">1331 - Thuế GTGT được khấu trừ HH, DV</div>
<svg style="left:64px;top:480px" width="8" height="12" viewBox="0 0 8 12"><path d="M0.5 0.5 L7.5 6 L0.5 11.5 Z" fill="#2e6fd6"/><path d="M0.5 0.5 L7.5 6 L0.5 6 Z" fill="#6aa2ef"/></svg>
<div class="t" style="left:79px;top:482px;font-size:11px;color:#14062e">1332 - Thuế GTGT được khấu trừ TSCĐ</div>
<div class="a" style="left:26px;top:501px;width:9px;height:9px;border:1px solid #8c8c8c;background:linear-gradient(#fff,#dcdcdc)"></div>
<div class="a" style="left:28px;top:505px;width:5px;height:1px;background:#000"></div>
<svg style="left:44px;top:497px" width="14" height="14" viewBox="0 0 14 14"><defs><radialGradient id="g26" cx="0.4" cy="0.3" r="0.7"><stop offset="0" stop-color="#a6ec8a"/><stop offset="1" stop-color="#3aa72a"/></radialGradient></defs><circle cx="7" cy="7" r="6.6" fill="url(#g26)" stroke="#4a9a3a" stroke-width="0.6"/><path d="M7 3.8 V10.2 M3.8 7 H10.2" stroke="#fff" stroke-width="2.2"/></svg>
<div class="t" style="left:63px;top:501px;font-size:11px;font-weight:bold;color:#000">136 - Phải thu nội bộ</div>
<div class="a" style="left:46px;top:512px;width:1px;height:13px;background-image:repeating-linear-gradient(180deg,#000 0 1px,transparent 1px 2px)"></div>
<svg style="left:64px;top:518px" width="8" height="12" viewBox="0 0 8 12"><path d="M0.5 0.5 L7.5 6 L0.5 11.5 Z" fill="#2e6fd6"/><path d="M0.5 0.5 L7.5 6 L0.5 6 Z" fill="#6aa2ef"/></svg>
<div class="t" style="left:79px;top:520px;font-size:11px;color:#14062e">1361 - Vốn kinh doanh ở các đơn vị trực thuộc</div>
<svg style="left:64px;top:537px" width="8" height="12" viewBox="0 0 8 12"><path d="M0.5 0.5 L7.5 6 L0.5 11.5 Z" fill="#2e6fd6"/><path d="M0.5 0.5 L7.5 6 L0.5 6 Z" fill="#6aa2ef"/></svg>
<div class="t" style="left:79px;top:539px;font-size:11px;color:#14062e">1368 - Phải thu nội bộ khác</div>
<div class="a" style="left:26px;top:558px;width:9px;height:9px;border:1px solid #8c8c8c;background:linear-gradient(#fff,#dcdcdc)"></div>
<div class="a" style="left:28px;top:562px;width:5px;height:1px;background:#000"></div>
<svg style="left:44px;top:554px" width="14" height="14" viewBox="0 0 14 14"><defs><radialGradient id="g29" cx="0.4" cy="0.3" r="0.7"><stop offset="0" stop-color="#a6ec8a"/><stop offset="1" stop-color="#3aa72a"/></radialGradient></defs><circle cx="7" cy="7" r="6.6" fill="url(#g29)" stroke="#4a9a3a" stroke-width="0.6"/><path d="M7 3.8 V10.2 M3.8 7 H10.2" stroke="#fff" stroke-width="2.2"/></svg>
<div class="t" style="left:63px;top:558px;font-size:11px;font-weight:bold;color:#000">138 - Phải thu khác</div>
<div class="a" style="left:46px;top:569px;width:1px;height:13px;background-image:repeating-linear-gradient(180deg,#000 0 1px,transparent 1px 2px)"></div>
<svg style="left:64px;top:575px" width="8" height="12" viewBox="0 0 8 12"><path d="M0.5 0.5 L7.5 6 L0.5 11.5 Z" fill="#2e6fd6"/><path d="M0.5 0.5 L7.5 6 L0.5 6 Z" fill="#6aa2ef"/></svg>
<div class="t" style="left:79px;top:577px;font-size:11px;color:#14062e">1381 - Tài sản thiếu chờ xử lý</div>
<svg style="left:64px;top:594px" width="8" height="12" viewBox="0 0 8 12"><path d="M0.5 0.5 L7.5 6 L0.5 11.5 Z" fill="#2e6fd6"/><path d="M0.5 0.5 L7.5 6 L0.5 6 Z" fill="#6aa2ef"/></svg>
<div class="t" style="left:79px;top:596px;font-size:11px;color:#14062e">1385 - Phải thu về cổ phần hoá</div>
<svg style="left:64px;top:613px" width="8" height="12" viewBox="0 0 8 12"><path d="M0.5 0.5 L7.5 6 L0.5 11.5 Z" fill="#2e6fd6"/><path d="M0.5 0.5 L7.5 6 L0.5 6 Z" fill="#6aa2ef"/></svg>
<div class="t" style="left:79px;top:615px;font-size:11px;color:#14062e">1388 - Phải thu khác</div>
<svg style="left:48px;top:632px" width="8" height="12" viewBox="0 0 8 12"><path d="M0.5 0.5 L7.5 6 L0.5 11.5 Z" fill="#2e6fd6"/><path d="M0.5 0.5 L7.5 6 L0.5 6 Z" fill="#6aa2ef"/></svg>
<div class="t" style="left:63px;top:634px;font-size:11px;color:#14062e">139 - Dự phòng phải thu khó đòi</div>
<svg style="left:48px;top:651px" width="8" height="12" viewBox="0 0 8 12"><path d="M0.5 0.5 L7.5 6 L0.5 11.5 Z" fill="#2e6fd6"/><path d="M0.5 0.5 L7.5 6 L0.5 6 Z" fill="#6aa2ef"/></svg>
<div class="t" style="left:63px;top:653px;font-size:11px;color:#14062e">141 - Tạm ứng</div>
</div>
<div class="a" style="left:309px;top:76px;width:1053px;height:138px;background:#c3d9f7;border:1px solid #5589c4"></div>
<div class="a" style="left:815px;top:77px;width:1px;height:136px;background:#111"></div>
<div class="a" style="left:321px;top:88px;width:82px;height:20px;background:#0c4f98"></div>
<div class="t" style="left:324px;top:93px;font-size:11px;letter-spacing:-0.18px;color:#fff">Mã tài khoản:</div>
<div class="a" style="left:405px;top:88px;width:80px;height:20px;background:#f0f0f0;border:1px solid #7da2ce"></div>
<div class="t" style="left:408px;top:93px;font-size:11px;color:#6e6a64">11121</div>
<div class="a" style="left:321px;top:110px;width:82px;height:20px;background:#4a84be"></div>
<div class="t" style="left:324px;top:115px;font-size:11px;letter-spacing:-0.18px;color:#fff">Tài khoản cha:</div>
<div class="a" style="left:405px;top:110px;width:100px;height:20px;background:#f0f0f0;border:1px solid #7da2ce"></div>
<div class="t" style="left:408px;top:115px;font-size:11px;color:#6e6a64">1112</div>
<div class="a" style="left:488px;top:112px;width:15px;height:16px;background:#fff"></div>
<svg style="left:491px;top:118px" width="9" height="5"><path d="M0 0 H9 L4.5 4.5 Z" fill="#5a5a5a"/></svg>
<div class="a" style="left:321px;top:132px;width:82px;height:20px;background:#0c4f98"></div>
<div class="t" style="left:324px;top:137px;font-size:11px;letter-spacing:-0.18px;color:#fff">Tên tài khoản:</div>
<div class="a" style="left:405px;top:132px;width:401px;height:20px;background:#f0f0f0;border:1px solid #7da2ce"></div>
<div class="t" style="left:408px;top:137px;font-size:11px;color:#6e6a64">Ngoại tệ USD</div>
<div class="a" style="left:484px;top:88px;width:21px;height:20px;background:radial-gradient(circle at 40% 40%,#b4c8e4,#c6dbf5 70%);border:2px solid #c4000a;box-shadow:inset 0 0 0 1px #eef6fb,2px 2px 3px rgba(40,60,90,0.35)"></div>
<svg style="left:491px;top:92px" width="8" height="10"><path d="M1.5 1 L2 8.5" stroke="#d8a040" stroke-width="1.5"/><path d="M1 0.5 L5.5 5 L3.5 5 L4 7 L1 5.5 Z" fill="#111"/></svg>
<div class="a" style="left:511px;top:88px;width:30px;height:20px;background:#f0f0f0;border:1px solid #7da2ce"></div>
<div class="a" style="left:546px;top:91px;width:13px;height:13px;background:linear-gradient(135deg,#dcdcdc,#fbfbfb);border:1px solid #b4b4b4"></div>
<div class="t" style="left:565px;top:92px;font-size:11px;color:#1e3c78">Là tài khoản cha</div>
<div class="a" style="left:706px;top:91px;width:13px;height:13px;background:linear-gradient(135deg,#dcdcdc,#fbfbfb);border:1px solid #b4b4b4"></div>
<div class="t" style="left:724px;top:92px;font-size:11px;color:#1e3c78">Ngưng sử dụng</div>
<div class="a" style="left:511px;top:110px;width:295px;height:20px;background:#f0f0f0;border:1px solid #7da2ce"></div>
<div class="t" style="left:514px;top:115px;font-size:11px;color:#6e6a64">Ngoại tệ các loại</div>
<div class="a" style="left:321px;top:160px;width:184px;height:20px;background:#4a82b9"></div>
<div class="t" style="left:325px;top:164px;font-size:11px;letter-spacing:-0.18px;color:#1a2535">Là tài khoản quản lý tiền</div>
<div class="a" style="left:491px;top:163px;width:13px;height:13px;background:linear-gradient(135deg,#dedede,#f6f6f6);border:1px solid #c8c8c8"></div>
<svg style="left:493px;top:165px" width="9" height="9"><path d="M1 4.5 L3.5 7.5 L8 0.5" fill="none" stroke="#b8b8b8" stroke-width="1.3"/></svg>
<div class="a" style="left:511px;top:160px;width:82px;height:20px;background:#f0f0f0;border:1px solid #7da2ce"></div>
<div class="t" style="left:514px;top:165px;font-size:11px;color:#6e6a64">USD</div>
<div class="a" style="left:576px;top:162px;width:15px;height:16px;background:#fff"></div>
<svg style="left:579px;top:168px" width="9" height="5"><path d="M0 0 H9 L4.5 4.5 Z" fill="#5a5a5a"/></svg>
<div class="a" style="left:599px;top:160px;width:118px;height:20px;background:#4a82b9"></div>
<div class="t" style="left:604px;top:165px;font-size:11px;letter-spacing:-0.18px;color:#fff">Tài khoản ngân hàng:</div>
<div class="a" style="left:720px;top:160px;width:86px;height:20px;background:#f0f0f0;border:1px solid #7da2ce"></div>
<div class="a" style="left:789px;top:162px;width:15px;height:16px;background:#fff"></div>
<svg style="left:792px;top:168px" width="9" height="5"><path d="M0 0 H9 L4.5 4.5 Z" fill="#5a5a5a"/></svg>
<div class="a" style="left:321px;top:182px;width:184px;height:20px;background:#4a82b9"></div>
<div class="t" style="left:325px;top:186px;font-size:11px;letter-spacing:-0.18px;color:#1a2535">Là tài khoản quản lý công nợ:</div>
<div class="a" style="left:491px;top:185px;width:13px;height:13px;background:linear-gradient(135deg,#dedede,#f6f6f6);border:1px solid #c8c8c8"></div>
<div class="a" style="left:511px;top:182px;width:295px;height:20px;background:#4a82b9"></div>
<div class="t" style="left:515px;top:186px;font-size:11px;letter-spacing:-0.18px;color:#1a2535">Quản lý công nợ chi tiết theo từng chứng từ công nợ</div>
<div class="a" style="left:792px;top:185px;width:13px;height:13px;background:linear-gradient(135deg,#dedede,#f6f6f6);border:1px solid #c8c8c8"></div>
<div class="a" style="left:824px;top:91px;width:13px;height:13px;background:linear-gradient(135deg,#dcdcdc,#fbfbfb);border:1px solid #b4b4b4"></div>
<div class="t" style="left:843px;top:92px;font-size:11px;color:#1e3c78;letter-spacing:-0.2px">Là tài khoản thuế GTGT</div>
<div class="a" style="left:824px;top:113px;width:13px;height:13px;background:linear-gradient(135deg,#dcdcdc,#fbfbfb);border:1px solid #b4b4b4"></div>
<div class="t" style="left:843px;top:114px;font-size:11px;color:#1e3c78;letter-spacing:-0.2px">Là tài khoản hàng tồn kho</div>
<div class="a" style="left:824px;top:135px;width:13px;height:13px;background:linear-gradient(135deg,#dcdcdc,#fbfbfb);border:1px solid #b4b4b4"></div>
<div class="t" style="left:843px;top:136px;font-size:11px;color:#1e3c78;letter-spacing:-0.2px">Là tài khoản chi tiết TTCP</div>
<div class="a" style="left:824px;top:159px;width:13px;height:13px;background:linear-gradient(135deg,#dcdcdc,#fbfbfb);border:1px solid #b4b4b4"></div>
<div class="t" style="left:843px;top:160px;font-size:11px;color:#1e3c78;letter-spacing:-0.2px">Là tài khoản chi tiết Mục phí</div>
<div class="a" style="left:991px;top:91px;width:13px;height:13px;background:linear-gradient(135deg,#dcdcdc,#fbfbfb);border:1px solid #b4b4b4"></div>
<div class="t" style="left:1010px;top:92px;font-size:11px;color:#1e3c78;letter-spacing:-0.2px">Là tài khoản chi tiết Mã phân tích 1</div>
<div class="a" style="left:991px;top:113px;width:13px;height:13px;background:linear-gradient(135deg,#dcdcdc,#fbfbfb);border:1px solid #b4b4b4"></div>
<div class="t" style="left:1010px;top:114px;font-size:11px;color:#1e3c78;letter-spacing:-0.2px">Là tài khoản chi tiết Mã phân tích 2</div>
<div class="a" style="left:991px;top:135px;width:13px;height:13px;background:linear-gradient(135deg,#dcdcdc,#fbfbfb);border:1px solid #b4b4b4"></div>
<div class="t" style="left:1010px;top:136px;font-size:11px;color:#1e3c78;letter-spacing:-0.2px">Là tài khoản chi tiết Mã phân tích 3</div>
<div class="a" style="left:991px;top:159px;width:13px;height:13px;background:linear-gradient(135deg,#dcdcdc,#fbfbfb);border:1px solid #b4b4b4"></div>
<div class="t" style="left:1010px;top:160px;font-size:11px;color:#1e3c78;letter-spacing:-0.2px">Là tài khoản chi tiết Mã phân tích 4</div>
<div class="a" style="left:991px;top:183px;width:13px;height:13px;background:linear-gradient(135deg,#dcdcdc,#fbfbfb);border:1px solid #b4b4b4"></div>
<div class="t" style="left:1010px;top:184px;font-size:11px;color:#1e3c78;letter-spacing:-0.2px">Là tài khoản chi tiết Mã phân tích 5</div>
<div class="a" style="left:309px;top:219px;width:1053px;height:26px;background:#c3d9f7;border:1px solid #5589c4"></div>
<svg style="left:316px;top:224px" width="14" height="14" viewBox="0 0 14 14"><defs><radialGradient id="c316" cx="0.4" cy="0.3" r="0.75"><stop offset="0" stop-color="#b4f09a"/><stop offset="1" stop-color="#3aa22a"/></radialGradient></defs><circle cx="7" cy="7" r="6.6" fill="url(#c316)"/><path d="M7 3.5 V10.5 M3.5 7 H10.5" stroke="#fff" stroke-width="2.2"/></svg>
<div class="t" style="left:333px;top:228px;font-size:11px;color:#1e3c8a"><u>T</u>hêm</div>
<svg style="left:369px;top:231px" width="6" height="4"><path d="M0 0 H6 L3 3.5 Z" fill="#1e3c8a"/></svg>
<svg style="left:386px;top:224px" width="14" height="14" viewBox="0 0 14 14"><defs><radialGradient id="c386" cx="0.4" cy="0.3" r="0.75"><stop offset="0" stop-color="#b4f09a"/><stop offset="1" stop-color="#3aa22a"/></radialGradient></defs><circle cx="7" cy="7" r="6.6" fill="url(#c386)"/><path d="M3.5 7 L6 9.8 L10.5 4.2" fill="none" stroke="#fff" stroke-width="2"/></svg>
<div class="t" style="left:403px;top:228px;font-size:11px;color:#1e3c8a"><u>S</u>ửa</div>
<svg style="left:435px;top:224px" width="14" height="14" viewBox="0 0 14 14"><defs><radialGradient id="c435" cx="0.4" cy="0.3" r="0.75"><stop offset="0" stop-color="#ffc09a"/><stop offset="1" stop-color="#e0662a"/></radialGradient></defs><circle cx="7" cy="7" r="6.6" fill="url(#c435)"/><path d="M3.5 7 H10.5" stroke="#fff" stroke-width="2.4"/></svg>
<div class="t" style="left:452px;top:228px;font-size:11px;color:#1e3c8a"><u>X</u>óa</div>
<svg style="left:483px;top:225px" width="14" height="13"><path d="M0.5 6.5 L6.5 0.5 V4 H13.5 V9 H6.5 V12.5 Z" fill="#e6e6e6" stroke="#bdbdbd"/></svg>
<div class="t" style="left:500px;top:228px;font-size:11px;color:#a0a8b4"><u>K</u>hôi Phục</div>
<svg style="left:1021px;top:223px" width="16" height="16"><rect x="0.5" y="0.5" width="13" height="14" fill="#e4e4e4" stroke="#bbb"/><rect x="3" y="1" width="7" height="4" fill="#fff" stroke="#bbb"/><path d="M9 8 V13 M6.5 10.5 L9 13.5 L11.5 10.5" stroke="#aaa" fill="none" stroke-width="1.4"/></svg>
<div class="t" style="left:1039px;top:228px;font-size:11px;color:#a0a8b4"><u>L</u>ưu</div>
<div class="a" style="left:1067px;top:225px;width:1px;height:16px;background:#fbfdff"></div>
<svg style="left:1072px;top:223px" width="16" height="16"><rect x="3.5" y="0.5" width="8" height="5" fill="#fff" stroke="#666"/><rect x="0.5" y="5.5" width="14" height="6" rx="1" fill="#d8d8d8" stroke="#555"/><rect x="3.5" y="9.5" width="8" height="5" fill="#fff" stroke="#666"/><circle cx="12" cy="7.5" r="0.8" fill="#3c3"/></svg>
<div class="t" style="left:1090px;top:228px;font-size:11px;color:#1e3c8a"><u>I</u>n</div>
<svg style="left:1110px;top:222px" width="16" height="17" viewBox="0 0 16 17"><path d="M3.5 8 V16 H12.5 V8" fill="#fff" stroke="#555"/><rect x="6.5" y="11" width="3" height="5" fill="#777"/><path d="M0.8 9 L8 2 L15.2 9" fill="none" stroke="#3fbf2a" stroke-width="2.8"/><path d="M0.8 9 L8 2 L15.2 9" fill="none" stroke="#8ef070" stroke-width="1"/></svg>
<div class="t" style="left:1128px;top:228px;font-size:11px;color:#1e3c8a">Đó<u>n</u>g</div>
<div class="a" style="left:1163px;top:225px;width:1px;height:16px;background:#fbfdff"></div>
<svg style="left:0;top:0" width="0" height="0"><defs><linearGradient id="navg" x1="0" y1="0" x2="1" y2="1"><stop offset="0" stop-color="#8cc0f8"/><stop offset="0.5" stop-color="#3a7ee0"/><stop offset="1" stop-color="#1a4fb0"/></linearGradient></defs></svg>
<svg style="left:1170px;top:226px" width="10" height="11"><rect x="0" y="0" width="2.5" height="11" fill="url(#navg)"/><path d="M9.5 0.5 L3 5.5 L9.5 10.5 Z" fill="url(#navg)"/></svg>
<svg style="left:1199px;top:226px" width="8" height="11"><path d="M7 0.5 L0.5 5.5 L7 10.5 Z" fill="url(#navg)"/></svg>
<div class="a" style="left:1222px;top:222px;width:58px;height:21px;background:#fff;border:1px solid #a9c2e2"></div>
<div class="t" style="left:1248px;top:228px;font-size:11px;color:#000">4</div>
<div class="t" style="left:1285px;top:228px;font-size:11.5px;color:#1e3c78">226</div>
<svg style="left:1318px;top:226px" width="8" height="11"><path d="M0.5 0.5 L7 5.5 L0.5 10.5 Z" fill="url(#navg)"/></svg>
<svg style="left:1345px;top:226px" width="10" height="11"><path d="M0.5 0.5 L6.5 5.5 L0.5 10.5 Z" fill="url(#navg)"/><rect x="7" y="0" width="2.5" height="11" fill="url(#navg)"/></svg>
<div class="a" style="left:309px;top:250px;width:1053px;height:448px;background:#ababab;border:1px solid #5a5a5a;border-top:2px solid #555"></div>
<div class="a" style="left:310px;top:272px;width:1051px;height:1px;background:#606060"></div>
<div class="a" style="left:310px;top:252px;width:870px;height:20px;background:#fff"></div>
<div class="a" style="left:310px;top:252px;width:51px;height:20px;background:#ff7a48"></div>
<div class="t" style="left:314px;top:259px;font-size:11px;color:#fff">Tìm</div>
<div class="a" style="left:361px;top:252px;width:80px;height:20px;background:linear-gradient(#fde2bc 0%,#fcd7a4 30%,#fab658 45%,#fcd080 70%,#fde890 100%)"></div>
<div class="a" style="left:589px;top:252px;width:1px;height:20px;background:#dfe6ef"></div>
<div class="a" style="left:669px;top:252px;width:1px;height:20px;background:#dfe6ef"></div>
<div class="a" style="left:719px;top:252px;width:1px;height:20px;background:#dfe6ef"></div>
<div class="a" style="left:769px;top:252px;width:1px;height:20px;background:#dfe6ef"></div>
<div class="a" style="left:819px;top:252px;width:1px;height:20px;background:#dfe6ef"></div>
<div class="a" style="left:879px;top:252px;width:1px;height:20px;background:#dfe6ef"></div>
<div class="a" style="left:929px;top:252px;width:1px;height:20px;background:#dfe6ef"></div>
<div class="a" style="left:979px;top:252px;width:1px;height:20px;background:#dfe6ef"></div>
<div class="a" style="left:1029px;top:252px;width:1px;height:20px;background:#dfe6ef"></div>
<div class="a" style="left:1079px;top:252px;width:1px;height:20px;background:#dfe6ef"></div>
<div class="a" style="left:1179px;top:252px;width:1px;height:20px;background:#dfe6ef"></div>
<div class="a" style="left:689px;top:257px;width:13px;height:13px;border:1px solid #a0a0a0;background:#fff"></div>
<div class="a" style="left:691px;top:259px;width:9px;height:9px;background:linear-gradient(135deg,#7fc3ee,#1e6fb0 60%,#0c4d8c);border:0.5px solid #0d3e70"></div>
<div class="a" style="left:739px;top:257px;width:13px;height:13px;border:1px solid #a0a0a0;background:#fff"></div>
<div class="a" style="left:741px;top:259px;width:9px;height:9px;background:linear-gradient(135deg,#7fc3ee,#1e6fb0 60%,#0c4d8c);border:0.5px solid #0d3e70"></div>
<div class="a" style="left:789px;top:257px;width:13px;height:13px;border:1px solid #a0a0a0;background:#fff"></div>
<div class="a" style="left:791px;top:259px;width:9px;height:9px;background:linear-gradient(135deg,#7fc3ee,#1e6fb0 60%,#0c4d8c);border:0.5px solid #0d3e70"></div>
<div class="a" style="left:844px;top:257px;width:13px;height:13px;border:1px solid #a0a0a0;background:#fff"></div>
<div class="a" style="left:846px;top:259px;width:9px;height:9px;background:linear-gradient(135deg,#7fc3ee,#1e6fb0 60%,#0c4d8c);border:0.5px solid #0d3e70"></div>
<div class="a" style="left:899px;top:257px;width:13px;height:13px;border:1px solid #a0a0a0;background:#fff"></div>
<div class="a" style="left:901px;top:259px;width:9px;height:9px;background:linear-gradient(135deg,#7fc3ee,#1e6fb0 60%,#0c4d8c);border:0.5px solid #0d3e70"></div>
<div class="a" style="left:949px;top:257px;width:13px;height:13px;border:1px solid #a0a0a0;background:#fff"></div>
<div class="a" style="left:951px;top:259px;width:9px;height:9px;background:linear-gradient(135deg,#7fc3ee,#1e6fb0 60%,#0c4d8c);border:0.5px solid #0d3e70"></div>
<div class="a" style="left:999px;top:257px;width:13px;height:13px;border:1px solid #a0a0a0;background:#fff"></div>
<div class="a" style="left:1001px;top:259px;width:9px;height:9px;background:linear-gradient(135deg,#7fc3ee,#1e6fb0 60%,#0c4d8c);border:0.5px solid #0d3e70"></div>
<div class="a" style="left:1049px;top:257px;width:13px;height:13px;border:1px solid #a0a0a0;background:#fff"></div>
<div class="a" style="left:1051px;top:259px;width:9px;height:9px;background:linear-gradient(135deg,#7fc3ee,#1e6fb0 60%,#0c4d8c);border:0.5px solid #0d3e70"></div>
<div class="a" style="left:310px;top:272px;width:870px;height:1px;background:#606060"></div>
<div class="a" style="left:310px;top:273px;width:870px;height:23px;background:linear-gradient(#fbfcfd,#e9edf3 60%,#dbe2ec)"></div>
<div class="a" style="left:310px;top:295px;width:870px;height:1px;background:#a6bad5"></div>
<div class="a" style="left:311px;top:274px;width:48px;height:21px;background:#a9c4e6;border:1px solid #c7daf2"></div>
<svg style="left:341px;top:278px" width="16" height="15"><path d="M15 0 V14 H0 Z" fill="url(#cg)"/><defs><linearGradient id="cg" x1="0" y1="0" x2="0" y2="1"><stop offset="0" stop-color="#fafafa"/><stop offset="1" stop-color="#c8ccd4"/></linearGradient></defs></svg>
<div class="a" style="left:439px;top:273px;width:151px;height:23px;background:linear-gradient(#f8d9a2,#f4c878 60%,#f2bf62);border-left:1px solid #ee9a38;border-right:1px solid #ee9a38;border-bottom:1px solid #ee9a38"></div>
<div class="a" style="left:439px;top:274px;width:1px;height:21px;background:#a7bbd6;box-shadow:1px 0 0 #fff"></div>
<div class="t" style="left:360px;top:279px;width:80px;text-align:center;font-size:10.5px;color:#111;text-indent:-18px">Tài Khoản</div>
<div class="a" style="left:589px;top:274px;width:1px;height:21px;background:#a7bbd6;box-shadow:1px 0 0 #fff"></div>
<div class="t" style="left:440px;top:279px;width:150px;text-align:center;font-size:10.5px;color:#111;text-indent:-19px">Tên Tài Khoản</div>
<div class="a" style="left:669px;top:274px;width:1px;height:21px;background:#a7bbd6;box-shadow:1px 0 0 #fff"></div>
<div class="t" style="left:590px;top:279px;width:80px;text-align:center;font-size:10.5px;color:#111;">Mã TK Cha</div>
<div class="a" style="left:719px;top:274px;width:1px;height:21px;background:#a7bbd6;box-shadow:1px 0 0 #fff"></div>
<div class="t" style="left:670px;top:279px;width:50px;text-align:center;font-size:10.5px;color:#111;">TK Cha</div>
<div class="a" style="left:769px;top:274px;width:1px;height:21px;background:#a7bbd6;box-shadow:1px 0 0 #fff"></div>
<div class="t" style="left:720px;top:279px;width:50px;text-align:center;font-size:10.5px;color:#111;">Tiền</div>
<div class="a" style="left:819px;top:274px;width:1px;height:21px;background:#a7bbd6;box-shadow:1px 0 0 #fff"></div>
<div class="t" style="left:770px;top:279px;width:50px;text-align:center;font-size:10.5px;color:#111;">C.Nợ</div>
<div class="a" style="left:879px;top:274px;width:1px;height:21px;background:#a7bbd6;box-shadow:1px 0 0 #fff"></div>
<div class="t" style="left:820px;top:279px;width:60px;text-align:center;font-size:10.5px;color:#111;">CN C.Tiết</div>
<div class="a" style="left:929px;top:274px;width:1px;height:21px;background:#a7bbd6;box-shadow:1px 0 0 #fff"></div>
<div class="t" style="left:880px;top:279px;width:50px;text-align:center;font-size:10.5px;color:#111;">VAT</div>
<div class="a" style="left:979px;top:274px;width:1px;height:21px;background:#a7bbd6;box-shadow:1px 0 0 #fff"></div>
<div class="t" style="left:930px;top:279px;width:50px;text-align:center;font-size:10.5px;color:#111;">Kho</div>
<div class="a" style="left:1029px;top:274px;width:1px;height:21px;background:#a7bbd6;box-shadow:1px 0 0 #fff"></div>
<div class="t" style="left:980px;top:279px;width:50px;text-align:center;font-size:10.5px;color:#111;">TTCP</div>
<div class="a" style="left:1079px;top:274px;width:1px;height:21px;background:#a7bbd6;box-shadow:1px 0 0 #fff"></div>
<div class="t" style="left:1030px;top:279px;width:50px;text-align:center;font-size:10.5px;color:#111;">M.Phí</div>
<div class="a" style="left:1179px;top:274px;width:1px;height:21px;background:#a7bbd6;box-shadow:1px 0 0 #fff"></div>
<div class="t" style="left:1080px;top:279px;width:100px;text-align:center;font-size:10.5px;color:#111;text-indent:-20px">Người Tạo</div>
<div class="a" style="left:310px;top:296px;width:870px;height:401px;overflow:hidden">
<div class="a" style="left:1px;top:0px;width:49px;height:21px;background:#e3ebf6"></div>
<div class="a" style="left:50px;top:0px;width:820px;height:21px;background:#fee3df"></div>
<div class="a" style="left:0px;top:21px;width:870px;height:1px;background:#c9d6ea"></div>
<div class="a" style="left:49px;top:0px;width:1px;height:21px;background:#c9d6ea"></div>
<div class="a" style="left:129px;top:0px;width:1px;height:21px;background:#c9d6ea"></div>
<div class="a" style="left:279px;top:0px;width:1px;height:21px;background:#c9d6ea"></div>
<div class="a" style="left:359px;top:0px;width:1px;height:21px;background:#c9d6ea"></div>
<div class="a" style="left:409px;top:0px;width:1px;height:21px;background:#c9d6ea"></div>
<div class="a" style="left:459px;top:0px;width:1px;height:21px;background:#c9d6ea"></div>
<div class="a" style="left:509px;top:0px;width:1px;height:21px;background:#c9d6ea"></div>
<div class="a" style="left:569px;top:0px;width:1px;height:21px;background:#c9d6ea"></div>
<div class="a" style="left:619px;top:0px;width:1px;height:21px;background:#c9d6ea"></div>
<div class="a" style="left:669px;top:0px;width:1px;height:21px;background:#c9d6ea"></div>
<div class="a" style="left:719px;top:0px;width:1px;height:21px;background:#c9d6ea"></div>
<div class="a" style="left:769px;top:0px;width:1px;height:21px;background:#c9d6ea"></div>
<div class="a" style="left:869px;top:0px;width:1px;height:21px;background:#c9d6ea"></div>
<div class="t" style="left:1px;top:7px;width:35px;text-align:right;font-size:11px;color:#111">1</div>
<div class="t" style="left:53px;top:6px;font-size:10.5px;color:#111">111</div>
<div class="t" style="left:133px;top:6px;font-size:10.5px;color:#111">Tiền mặt</div>
<div class="t" style="left:283px;top:6px;font-size:10.5px;color:#111"></div>
<div class="a" style="left:378px;top:4px;width:13px;height:13px;border:1px solid #8e8e8e;background:linear-gradient(135deg,#d6d6d6,#fafafa)"></div>
<div class="a" style="left:379px;top:5px;width:11px;height:11px;border:1px solid #f4f4f4"></div>
<svg style="left:380px;top:6px" width="9" height="9"><path d="M1.2 4.2 L3.6 7.6 L7.8 0.6" fill="none" stroke="#2d4f9e" stroke-width="1.6"/></svg>
<div class="a" style="left:428px;top:4px;width:13px;height:13px;border:1px solid #8e8e8e;background:linear-gradient(135deg,#d6d6d6,#fafafa)"></div>
<div class="a" style="left:429px;top:5px;width:11px;height:11px;border:1px solid #f4f4f4"></div>
<svg style="left:430px;top:6px" width="9" height="9"><path d="M1.2 4.2 L3.6 7.6 L7.8 0.6" fill="none" stroke="#2d4f9e" stroke-width="1.6"/></svg>
<div class="a" style="left:478px;top:4px;width:13px;height:13px;border:1px solid #8e8e8e;background:linear-gradient(135deg,#d6d6d6,#fafafa)"></div>
<div class="a" style="left:479px;top:5px;width:11px;height:11px;border:1px solid #f4f4f4"></div>
<div class="a" style="left:533px;top:4px;width:13px;height:13px;border:1px solid #8e8e8e;background:linear-gradient(135deg,#d6d6d6,#fafafa)"></div>
<div class="a" style="left:534px;top:5px;width:11px;height:11px;border:1px solid #f4f4f4"></div>
<div class="a" style="left:588px;top:4px;width:13px;height:13px;border:1px solid #8e8e8e;background:linear-gradient(135deg,#d6d6d6,#fafafa)"></div>
<div class="a" style="left:589px;top:5px;width:11px;height:11px;border:1px solid #f4f4f4"></div>
<div class="a" style="left:638px;top:4px;width:13px;height:13px;border:1px solid #8e8e8e;background:linear-gradient(135deg,#d6d6d6,#fafafa)"></div>
<div class="a" style="left:639px;top:5px;width:11px;height:11px;border:1px solid #f4f4f4"></div>
<div class="a" style="left:688px;top:4px;width:13px;height:13px;border:1px solid #8e8e8e;background:linear-gradient(135deg,#d6d6d6,#fafafa)"></div>
<div class="a" style="left:689px;top:5px;width:11px;height:11px;border:1px solid #f4f4f4"></div>
<div class="a" style="left:738px;top:4px;width:13px;height:13px;border:1px solid #8e8e8e;background:linear-gradient(135deg,#d6d6d6,#fafafa)"></div>
<div class="a" style="left:739px;top:5px;width:11px;height:11px;border:1px solid #f4f4f4"></div>
<div class="t" style="left:773px;top:6px;font-size:10.5px;color:#111">ADMIN</div>
<div class="a" style="left:1px;top:22px;width:49px;height:21px;background:#e3ebf6"></div>
<div class="a" style="left:50px;top:22px;width:820px;height:21px;background:#fff"></div>
<div class="a" style="left:0px;top:43px;width:870px;height:1px;background:#c9d6ea"></div>
<div class="a" style="left:49px;top:22px;width:1px;height:21px;background:#c9d6ea"></div>
<div class="a" style="left:129px;top:22px;width:1px;height:21px;background:#c9d6ea"></div>
<div class="a" style="left:279px;top:22px;width:1px;height:21px;background:#c9d6ea"></div>
<div class="a" style="left:359px;top:22px;width:1px;height:21px;background:#c9d6ea"></div>
<div class="a" style="left:409px;top:22px;width:1px;height:21px;background:#c9d6ea"></div>
<div class="a" style="left:459px;top:22px;width:1px;height:21px;background:#c9d6ea"></div>
<div class="a" style="left:509px;top:22px;width:1px;height:21px;background:#c9d6ea"></div>
<div class="a" style="left:569px;top:22px;width:1px;height:21px;background:#c9d6ea"></div>
<div class="a" style="left:619px;top:22px;width:1px;height:21px;background:#c9d6ea"></div>
<div class="a" style="left:669px;top:22px;width:1px;height:21px;background:#c9d6ea"></div>
<div class="a" style="left:719px;top:22px;width:1px;height:21px;background:#c9d6ea"></div>
<div class="a" style="left:769px;top:22px;width:1px;height:21px;background:#c9d6ea"></div>
<div class="a" style="left:869px;top:22px;width:1px;height:21px;background:#c9d6ea"></div>
<div class="t" style="left:1px;top:29px;width:35px;text-align:right;font-size:11px;color:#111">2</div>
<div class="t" style="left:53px;top:28px;font-size:10.5px;color:#111">1111</div>
<div class="t" style="left:133px;top:28px;font-size:10.5px;color:#111">Tiền Việt Nam</div>
<div class="t" style="left:283px;top:28px;font-size:10.5px;color:#111">111</div>
<div class="a" style="left:378px;top:26px;width:13px;height:13px;border:1px solid #8e8e8e;background:linear-gradient(135deg,#d6d6d6,#fafafa)"></div>
<div class="a" style="left:379px;top:27px;width:11px;height:11px;border:1px solid #f4f4f4"></div>
<div class="a" style="left:428px;top:26px;width:13px;height:13px;border:1px solid #8e8e8e;background:linear-gradient(135deg,#d6d6d6,#fafafa)"></div>
<div class="a" style="left:429px;top:27px;width:11px;height:11px;border:1px solid #f4f4f4"></div>
<svg style="left:430px;top:28px" width="9" height="9"><path d="M1.2 4.2 L3.6 7.6 L7.8 0.6" fill="none" stroke="#2d4f9e" stroke-width="1.6"/></svg>
<div class="a" style="left:478px;top:26px;width:13px;height:13px;border:1px solid #8e8e8e;background:linear-gradient(135deg,#d6d6d6,#fafafa)"></div>
<div class="a" style="left:479px;top:27px;width:11px;height:11px;border:1px solid #f4f4f4"></div>
<div class="a" style="left:533px;top:26px;width:13px;height:13px;border:1px solid #8e8e8e;background:linear-gradient(135deg,#d6d6d6,#fafafa)"></div>
<div class="a" style="left:534px;top:27px;width:11px;height:11px;border:1px solid #f4f4f4"></div>
<div class="a" style="left:588px;top:26px;width:13px;height:13px;border:1px solid #8e8e8e;background:linear-gradient(135deg,#d6d6d6,#fafafa)"></div>
<div class="a" style="left:589px;top:27px;width:11px;height:11px;border:1px solid #f4f4f4"></div>
<div class="a" style="left:638px;top:26px;width:13px;height:13px;border:1px solid #8e8e8e;background:linear-gradient(135deg,#d6d6d6,#fafafa)"></div>
<div class="a" style="left:639px;top:27px;width:11px;height:11px;border:1px solid #f4f4f4"></div>
<div class="a" style="left:688px;top:26px;width:13px;height:13px;border:1px solid #8e8e8e;background:linear-gradient(135deg,#d6d6d6,#fafafa)"></div>
<div class="a" style="left:689px;top:27px;width:11px;height:11px;border:1px solid #f4f4f4"></div>
<div class="a" style="left:738px;top:26px;width:13px;height:13px;border:1px solid #8e8e8e;background:linear-gradient(135deg,#d6d6d6,#fafafa)"></div>
<div class="a" style="left:739px;top:27px;width:11px;height:11px;border:1px solid #f4f4f4"></div>
<div class="t" style="left:773px;top:28px;font-size:10.5px;color:#111">ADMIN</div>
<div class="a" style="left:1px;top:44px;width:49px;height:21px;background:#e3ebf6"></div>
<div class="a" style="left:50px;top:44px;width:820px;height:21px;background:#fee3df"></div>
<div class="a" style="left:0px;top:65px;width:870px;height:1px;background:#c9d6ea"></div>
<div class="a" style="left:49px;top:44px;width:1px;height:21px;background:#c9d6ea"></div>
<div class="a" style="left:129px;top:44px;width:1px;height:21px;background:#c9d6ea"></div>
<div class="a" style="left:279px;top:44px;width:1px;height:21px;background:#c9d6ea"></div>
<div class="a" style="left:359px;top:44px;width:1px;height:21px;background:#c9d6ea"></div>
<div class="a" style="left:409px;top:44px;width:1px;height:21px;background:#c9d6ea"></div>
<div class="a" style="left:459px;top:44px;width:1px;height:21px;background:#c9d6ea"></div>
<div class="a" style="left:509px;top:44px;width:1px;height:21px;background:#c9d6ea"></div>
<div class="a" style="left:569px;top:44px;width:1px;height:21px;background:#c9d6ea"></div>
<div class="a" style="left:619px;top:44px;width:1px;height:21px;background:#c9d6ea"></div>
<div class="a" style="left:669px;top:44px;width:1px;height:21px;background:#c9d6ea"></div>
<div class="a" style="left:719px;top:44px;width:1px;height:21px;background:#c9d6ea"></div>
<div class="a" style="left:769px;top:44px;width:1px;height:21px;background:#c9d6ea"></div>
<div class="a" style="left:869px;top:44px;width:1px;height:21px;background:#c9d6ea"></div>
<div class="t" style="left:1px;top:51px;width:35px;text-align:right;font-size:11px;color:#111">3</div>
<div class="t" style="left:53px;top:50px;font-size:10.5px;color:#111">1112</div>
<div class="t" style="left:133px;top:50px;font-size:10.5px;color:#111">Ngoại tệ các loại</div>
<div class="t" style="left:283px;top:50px;font-size:10.5px;color:#111">111</div>
<div class="a" style="left:378px;top:48px;width:13px;height:13px;border:1px solid #8e8e8e;background:linear-gradient(135deg,#d6d6d6,#fafafa)"></div>
<div class="a" style="left:379px;top:49px;width:11px;height:11px;border:1px solid #f4f4f4"></div>
<svg style="left:380px;top:50px" width="9" height="9"><path d="M1.2 4.2 L3.6 7.6 L7.8 0.6" fill="none" stroke="#2d4f9e" stroke-width="1.6"/></svg>
<div class="a" style="left:428px;top:48px;width:13px;height:13px;border:1px solid #8e8e8e;background:linear-gradient(135deg,#d6d6d6,#fafafa)"></div>
<div class="a" style="left:429px;top:49px;width:11px;height:11px;border:1px solid #f4f4f4"></div>
<svg style="left:430px;top:50px" width="9" height="9"><path d="M1.2 4.2 L3.6 7.6 L7.8 0.6" fill="none" stroke="#2d4f9e" stroke-width="1.6"/></svg>
<div class="a" style="left:478px;top:48px;width:13px;height:13px;border:1px solid #8e8e8e;background:linear-gradient(135deg,#d6d6d6,#fafafa)"></div>
<div class="a" style="left:479px;top:49px;width:11px;height:11px;border:1px solid #f4f4f4"></div>
<div class="a" style="left:533px;top:48px;width:13px;height:13px;border:1px solid #8e8e8e;background:linear-gradient(135deg,#d6d6d6,#fafafa)"></div>
<div class="a" style="left:534px;top:49px;width:11px;height:11px;border:1px solid #f4f4f4"></div>
<div class="a" style="left:588px;top:48px;width:13px;height:13px;border:1px solid #8e8e8e;background:linear-gradient(135deg,#d6d6d6,#fafafa)"></div>
<div class="a" style="left:589px;top:49px;width:11px;height:11px;border:1px solid #f4f4f4"></div>
<div class="a" style="left:638px;top:48px;width:13px;height:13px;border:1px solid #8e8e8e;background:linear-gradient(135deg,#d6d6d6,#fafafa)"></div>
<div class="a" style="left:639px;top:49px;width:11px;height:11px;border:1px solid #f4f4f4"></div>
<div class="a" style="left:688px;top:48px;width:13px;height:13px;border:1px solid #8e8e8e;background:linear-gradient(135deg,#d6d6d6,#fafafa)"></div>
<div class="a" style="left:689px;top:49px;width:11px;height:11px;border:1px solid #f4f4f4"></div>
<div class="a" style="left:738px;top:48px;width:13px;height:13px;border:1px solid #8e8e8e;background:linear-gradient(135deg,#d6d6d6,#fafafa)"></div>
<div class="a" style="left:739px;top:49px;width:11px;height:11px;border:1px solid #f4f4f4"></div>
<div class="t" style="left:773px;top:50px;font-size:10.5px;color:#111">ADMIN</div>
<div class="a" style="left:1px;top:66px;width:49px;height:21px;background:#e3ebf6"></div>
<div class="a" style="left:50px;top:66px;width:820px;height:21px;background:#fff"></div>
<div class="a" style="left:1px;top:65px;width:49px;height:23px;background:#fdd49c;border:1px solid #f0a040"></div>
<div class="a" style="left:130px;top:66px;width:150px;height:21px;background:linear-gradient(#fde6c4,#fbd9a8 35%,#f8b860 55%,#fbcf88 75%,#fde9b0)"></div>
<svg style="left:8px;top:73px" width="5" height="9"><path d="M0 0 L4.5 4.5 L0 9 Z" fill="#000"/></svg>
<div class="a" style="left:0px;top:87px;width:870px;height:1px;background:#c9d6ea"></div>
<div class="a" style="left:49px;top:66px;width:1px;height:21px;background:#c9d6ea"></div>
<div class="a" style="left:129px;top:66px;width:1px;height:21px;background:#c9d6ea"></div>
<div class="a" style="left:279px;top:66px;width:1px;height:21px;background:#c9d6ea"></div>
<div class="a" style="left:359px;top:66px;width:1px;height:21px;background:#c9d6ea"></div>
<div class="a" style="left:409px;top:66px;width:1px;height:21px;background:#c9d6ea"></div>
<div class="a" style="left:459px;top:66px;width:1px;height:21px;background:#c9d6ea"></div>
<div class="a" style="left:509px;top:66px;width:1px;height:21px;background:#c9d6ea"></div>
<div class="a" style="left:569px;top:66px;width:1px;height:21px;background:#c9d6ea"></div>
<div class="a" style="left:619px;top:66px;width:1px;height:21px;background:#c9d6ea"></div>
<div class="a" style="left:669px;top:66px;width:1px;height:21px;background:#c9d6ea"></div>
<div class="a" style="left:719px;top:66px;width:1px;height:21px;background:#c9d6ea"></div>
<div class="a" style="left:769px;top:66px;width:1px;height:21px;background:#c9d6ea"></div>
<div class="a" style="left:869px;top:66px;width:1px;height:21px;background:#c9d6ea"></div>
<div class="t" style="left:1px;top:73px;width:35px;text-align:right;font-size:11px;color:#111">4</div>
<div class="t" style="left:53px;top:72px;font-size:10.5px;color:#111">11121</div>
<div class="t" style="left:133px;top:72px;font-size:10.5px;color:#111">Ngoại tệ USD</div>
<div class="t" style="left:283px;top:72px;font-size:10.5px;color:#111">1112</div>
<div class="a" style="left:378px;top:70px;width:13px;height:13px;border:1px solid #8e8e8e;background:linear-gradient(135deg,#d6d6d6,#fafafa)"></div>
<div class="a" style="left:379px;top:71px;width:11px;height:11px;border:1px solid #f4f4f4"></div>
<div class="a" style="left:428px;top:70px;width:13px;height:13px;border:1px solid #8e8e8e;background:linear-gradient(135deg,#d6d6d6,#fafafa)"></div>
<div class="a" style="left:429px;top:71px;width:11px;height:11px;border:1px solid #f4f4f4"></div>
<svg style="left:430px;top:72px" width="9" height="9"><path d="M1.2 4.2 L3.6 7.6 L7.8 0.6" fill="none" stroke="#2d4f9e" stroke-width="1.6"/></svg>
<div class="a" style="left:478px;top:70px;width:13px;height:13px;border:1px solid #8e8e8e;background:linear-gradient(135deg,#d6d6d6,#fafafa)"></div>
<div class="a" style="left:479px;top:71px;width:11px;height:11px;border:1px solid #f4f4f4"></div>
<div class="a" style="left:533px;top:70px;width:13px;height:13px;border:1px solid #8e8e8e;background:linear-gradient(135deg,#d6d6d6,#fafafa)"></div>
<div class="a" style="left:534px;top:71px;width:11px;height:11px;border:1px solid #f4f4f4"></div>
<div class="a" style="left:588px;top:70px;width:13px;height:13px;border:1px solid #8e8e8e;background:linear-gradient(135deg,#d6d6d6,#fafafa)"></div>
<div class="a" style="left:589px;top:71px;width:11px;height:11px;border:1px solid #f4f4f4"></div>
<div class="a" style="left:638px;top:70px;width:13px;height:13px;border:1px solid #8e8e8e;background:linear-gradient(135deg,#d6d6d6,#fafafa)"></div>
<div class="a" style="left:639px;top:71px;width:11px;height:11px;border:1px solid #f4f4f4"></div>
<div class="a" style="left:688px;top:70px;width:13px;height:13px;border:1px solid #8e8e8e;background:linear-gradient(135deg,#d6d6d6,#fafafa)"></div>
<div class="a" style="left:689px;top:71px;width:11px;height:11px;border:1px solid #f4f4f4"></div>
<div class="a" style="left:738px;top:70px;width:13px;height:13px;border:1px solid #8e8e8e;background:linear-gradient(135deg,#d6d6d6,#fafafa)"></div>
<div class="a" style="left:739px;top:71px;width:11px;height:11px;border:1px solid #f4f4f4"></div>
<div class="t" style="left:773px;top:72px;font-size:10.5px;color:#111">ADMIN</div>
<div class="a" style="left:1px;top:88px;width:49px;height:21px;background:#e3ebf6"></div>
<div class="a" style="left:50px;top:88px;width:820px;height:21px;background:#fee3df"></div>
<div class="a" style="left:0px;top:109px;width:870px;height:1px;background:#c9d6ea"></div>
<div class="a" style="left:49px;top:88px;width:1px;height:21px;background:#c9d6ea"></div>
<div class="a" style="left:129px;top:88px;width:1px;height:21px;background:#c9d6ea"></div>
<div class="a" style="left:279px;top:88px;width:1px;height:21px;background:#c9d6ea"></div>
<div class="a" style="left:359px;top:88px;width:1px;height:21px;background:#c9d6ea"></div>
<div class="a" style="left:409px;top:88px;width:1px;height:21px;background:#c9d6ea"></div>
<div class="a" style="left:459px;top:88px;width:1px;height:21px;background:#c9d6ea"></div>
<div class="a" style="left:509px;top:88px;width:1px;height:21px;background:#c9d6ea"></div>
<div class="a" style="left:569px;top:88px;width:1px;height:21px;background:#c9d6ea"></div>
<div class="a" style="left:619px;top:88px;width:1px;height:21px;background:#c9d6ea"></div>
<div class="a" style="left:669px;top:88px;width:1px;height:21px;background:#c9d6ea"></div>
<div class="a" style="left:719px;top:88px;width:1px;height:21px;background:#c9d6ea"></div>
<div class="a" style="left:769px;top:88px;width:1px;height:21px;background:#c9d6ea"></div>
<div class="a" style="left:869px;top:88px;width:1px;height:21px;background:#c9d6ea"></div>
<div class="t" style="left:1px;top:95px;width:35px;text-align:right;font-size:11px;color:#111">5</div>
<div class="t" style="left:53px;top:94px;font-size:10.5px;color:#111">112</div>
<div class="t" style="left:133px;top:94px;font-size:10.5px;color:#111">Tiền gởi Ngân Hàng</div>
<div class="t" style="left:283px;top:94px;font-size:10.5px;color:#111"></div>
<div class="a" style="left:378px;top:92px;width:13px;height:13px;border:1px solid #8e8e8e;background:linear-gradient(135deg,#d6d6d6,#fafafa)"></div>
<div class="a" style="left:379px;top:93px;width:11px;height:11px;border:1px solid #f4f4f4"></div>
<svg style="left:380px;top:94px" width="9" height="9"><path d="M1.2 4.2 L3.6 7.6 L7.8 0.6" fill="none" stroke="#2d4f9e" stroke-width="1.6"/></svg>
<div class="a" style="left:428px;top:92px;width:13px;height:13px;border:1px solid #8e8e8e;background:linear-gradient(135deg,#d6d6d6,#fafafa)"></div>
<div class="a" style="left:429px;top:93px;width:11px;height:11px;border:1px solid #f4f4f4"></div>
<svg style="left:430px;top:94px" width="9" height="9"><path d="M1.2 4.2 L3.6 7.6 L7.8 0.6" fill="none" stroke="#2d4f9e" stroke-width="1.6"/></svg>
<div class="a" style="left:478px;top:92px;width:13px;height:13px;border:1px solid #8e8e8e;background:linear-gradient(135deg,#d6d6d6,#fafafa)"></div>
<div class="a" style="left:479px;top:93px;width:11px;height:11px;border:1px solid #f4f4f4"></div>
<div class="a" style="left:533px;top:92px;width:13px;height:13px;border:1px solid #8e8e8e;background:linear-gradient(135deg,#d6d6d6,#fafafa)"></div>
<div class="a" style="left:534px;top:93px;width:11px;height:11px;border:1px solid #f4f4f4"></div>
<div class="a" style="left:588px;top:92px;width:13px;height:13px;border:1px solid #8e8e8e;background:linear-gradient(135deg,#d6d6d6,#fafafa)"></div>
<div class="a" style="left:589px;top:93px;width:11px;height:11px;border:1px solid #f4f4f4"></div>
<div class="a" style="left:638px;top:92px;width:13px;height:13px;border:1px solid #8e8e8e;background:linear-gradient(135deg,#d6d6d6,#fafafa)"></div>
<div class="a" style="left:639px;top:93px;width:11px;height:11px;border:1px solid #f4f4f4"></div>
<div class="a" style="left:688px;top:92px;width:13px;height:13px;border:1px solid #8e8e8e;background:linear-gradient(135deg,#d6d6d6,#fafafa)"></div>
<div class="a" style="left:689px;top:93px;width:11px;height:11px;border:1px solid #f4f4f4"></div>
<div class="a" style="left:738px;top:92px;width:13px;height:13px;border:1px solid #8e8e8e;background:linear-gradient(135deg,#d6d6d6,#fafafa)"></div>
<div class="a" style="left:739px;top:93px;width:11px;height:11px;border:1px solid #f4f4f4"></div>
<div class="t" style="left:773px;top:94px;font-size:10.5px;color:#111">ADMIN</div>
<div class="a" style="left:1px;top:110px;width:49px;height:21px;background:#e3ebf6"></div>
<div class="a" style="left:50px;top:110px;width:820px;height:21px;background:#fee3df"></div>
<div class="a" style="left:0px;top:131px;width:870px;height:1px;background:#c9d6ea"></div>
<div class="a" style="left:49px;top:110px;width:1px;height:21px;background:#c9d6ea"></div>
<div class="a" style="left:129px;top:110px;width:1px;height:21px;background:#c9d6ea"></div>
<div class="a" style="left:279px;top:110px;width:1px;height:21px;background:#c9d6ea"></div>
<div class="a" style="left:359px;top:110px;width:1px;height:21px;background:#c9d6ea"></div>
<div class="a" style="left:409px;top:110px;width:1px;height:21px;background:#c9d6ea"></div>
<div class="a" style="left:459px;top:110px;width:1px;height:21px;background:#c9d6ea"></div>
<div class="a" style="left:509px;top:110px;width:1px;height:21px;background:#c9d6ea"></div>
<div class="a" style="left:569px;top:110px;width:1px;height:21px;background:#c9d6ea"></div>
<div class="a" style="left:619px;top:110px;width:1px;height:21px;background:#c9d6ea"></div>
<div class="a" style="left:669px;top:110px;width:1px;height:21px;background:#c9d6ea"></div>
<div class="a" style="left:719px;top:110px;width:1px;height:21px;background:#c9d6ea"></div>
<div class="a" style="left:769px;top:110px;width:1px;height:21px;background:#c9d6ea"></div>
<div class="a" style="left:869px;top:110px;width:1px;height:21px;background:#c9d6ea"></div>
<div class="t" style="left:1px;top:117px;width:35px;text-align:right;font-size:11px;color:#111">6</div>
<div class="t" style="left:53px;top:116px;font-size:10.5px;color:#111">1121</div>
<div class="t" style="left:133px;top:116px;font-size:10.5px;color:#111">Tiền gởi NH (VNĐ)</div>
<div class="t" style="left:283px;top:116px;font-size:10.5px;color:#111">112</div>
<div class="a" style="left:378px;top:114px;width:13px;height:13px;border:1px solid #8e8e8e;background:linear-gradient(135deg,#d6d6d6,#fafafa)"></div>
<div class="a" style="left:379px;top:115px;width:11px;height:11px;border:1px solid #f4f4f4"></div>
<svg style="left:380px;top:116px" width="9" height="9"><path d="M1.2 4.2 L3.6 7.6 L7.8 0.6" fill="none" stroke="#2d4f9e" stroke-width="1.6"/></svg>
<div class="a" style="left:428px;top:114px;width:13px;height:13px;border:1px solid #8e8e8e;background:linear-gradient(135deg,#d6d6d6,#fafafa)"></div>
<div class="a" style="left:429px;top:115px;width:11px;height:11px;border:1px solid #f4f4f4"></div>
<svg style="left:430px;top:116px" width="9" height="9"><path d="M1.2 4.2 L3.6 7.6 L7.8 0.6" fill="none" stroke="#2d4f9e" stroke-width="1.6"/></svg>
<div class="a" style="left:478px;top:114px;width:13px;height:13px;border:1px solid #8e8e8e;background:linear-gradient(135deg,#d6d6d6,#fafafa)"></div>
<div class="a" style="left:479px;top:115px;width:11px;height:11px;border:1px solid #f4f4f4"></div>
<div class="a" style="left:533px;top:114px;width:13px;height:13px;border:1px solid #8e8e8e;background:linear-gradient(135deg,#d6d6d6,#fafafa)"></div>
<div class="a" style="left:534px;top:115px;width:11px;height:11px;border:1px solid #f4f4f4"></div>
<div class="a" style="left:588px;top:114px;width:13px;height:13px;border:1px solid #8e8e8e;background:linear-gradient(135deg,#d6d6d6,#fafafa)"></div>
<div class="a" style="left:589px;top:115px;width:11px;height:11px;border:1px solid #f4f4f4"></div>
<div class="a" style="left:638px;top:114px;width:13px;height:13px;border:1px solid #8e8e8e;background:linear-gradient(135deg,#d6d6d6,#fafafa)"></div>
<div class="a" style="left:639px;top:115px;width:11px;height:11px;border:1px solid #f4f4f4"></div>
<div class="a" style="left:688px;top:114px;width:13px;height:13px;border:1px solid #8e8e8e;background:linear-gradient(135deg,#d6d6d6,#fafafa)"></div>
<div class="a" style="left:689px;top:115px;width:11px;height:11px;border:1px solid #f4f4f4"></div>
<div class="a" style="left:738px;top:114px;width:13px;height:13px;border:1px solid #8e8e8e;background:linear-gradient(135deg,#d6d6d6,#fafafa)"></div>
<div class="a" style="left:739px;top:115px;width:11px;height:11px;border:1px solid #f4f4f4"></div>
<div class="t" style="left:773px;top:116px;font-size:10.5px;color:#111">ADMIN</div>
<div class="a" style="left:1px;top:132px;width:49px;height:21px;background:#e3ebf6"></div>
<div class="a" style="left:50px;top:132px;width:820px;height:21px;background:#fff"></div>
<div class="a" style="left:0px;top:153px;width:870px;height:1px;background:#c9d6ea"></div>
<div class="a" style="left:49px;top:132px;width:1px;height:21px;background:#c9d6ea"></div>
<div class="a" style="left:129px;top:132px;width:1px;height:21px;background:#c9d6ea"></div>
<div class="a" style="left:279px;top:132px;width:1px;height:21px;background:#c9d6ea"></div>
<div class="a" style="left:359px;top:132px;width:1px;height:21px;background:#c9d6ea"></div>
<div class="a" style="left:409px;top:132px;width:1px;height:21px;background:#c9d6ea"></div>
<div class="a" style="left:459px;top:132px;width:1px;height:21px;background:#c9d6ea"></div>
<div class="a" style="left:509px;top:132px;width:1px;height:21px;background:#c9d6ea"></div>
<div class="a" style="left:569px;top:132px;width:1px;height:21px;background:#c9d6ea"></div>
<div class="a" style="left:619px;top:132px;width:1px;height:21px;background:#c9d6ea"></div>
<div class="a" style="left:669px;top:132px;width:1px;height:21px;background:#c9d6ea"></div>
<div class="a" style="left:719px;top:132px;width:1px;height:21px;background:#c9d6ea"></div>
<div class="a" style="left:769px;top:132px;width:1px;height:21px;background:#c9d6ea"></div>
<div class="a" style="left:869px;top:132px;width:1px;height:21px;background:#c9d6ea"></div>
<div class="t" style="left:1px;top:139px;width:35px;text-align:right;font-size:11px;color:#111">7</div>
<div class="t" style="left:53px;top:138px;font-size:10.5px;color:#111">11211</div>
<div class="t" style="left:133px;top:138px;font-size:10.5px;color:#111">Tiền gởi VND tại ngân hàng...</div>
<div class="t" style="left:283px;top:138px;font-size:10.5px;color:#111">1121</div>
<div class="a" style="left:378px;top:136px;width:13px;height:13px;border:1px solid #8e8e8e;background:linear-gradient(135deg,#d6d6d6,#fafafa)"></div>
<div class="a" style="left:379px;top:137px;width:11px;height:11px;border:1px solid #f4f4f4"></div>
<div class="a" style="left:428px;top:136px;width:13px;height:13px;border:1px solid #8e8e8e;background:linear-gradient(135deg,#d6d6d6,#fafafa)"></div>
<div class="a" style="left:429px;top:137px;width:11px;height:11px;border:1px solid #f4f4f4"></div>
<svg style="left:430px;top:138px" width="9" height="9"><path d="M1.2 4.2 L3.6 7.6 L7.8 0.6" fill="none" stroke="#2d4f9e" stroke-width="1.6"/></svg>
<div class="a" style="left:478px;top:136px;width:13px;height:13px;border:1px solid #8e8e8e;background:linear-gradient(135deg,#d6d6d6,#fafafa)"></div>
<div class="a" style="left:479px;top:137px;width:11px;height:11px;border:1px solid #f4f4f4"></div>
<div class="a" style="left:533px;top:136px;width:13px;height:13px;border:1px solid #8e8e8e;background:linear-gradient(135deg,#d6d6d6,#fafafa)"></div>
<div class="a" style="left:534px;top:137px;width:11px;height:11px;border:1px solid #f4f4f4"></div>
<div class="a" style="left:588px;top:136px;width:13px;height:13px;border:1px solid #8e8e8e;background:linear-gradient(135deg,#d6d6d6,#fafafa)"></div>
<div class="a" style="left:589px;top:137px;width:11px;height:11px;border:1px solid #f4f4f4"></div>
<div class="a" style="left:638px;top:136px;width:13px;height:13px;border:1px solid #8e8e8e;background:linear-gradient(135deg,#d6d6d6,#fafafa)"></div>
<div class="a" style="left:639px;top:137px;width:11px;height:11px;border:1px solid #f4f4f4"></div>
<div class="a" style="left:688px;top:136px;width:13px;height:13px;border:1px solid #8e8e8e;background:linear-gradient(135deg,#d6d6d6,#fafafa)"></div>
<div class="a" style="left:689px;top:137px;width:11px;height:11px;border:1px solid #f4f4f4"></div>
<div class="a" style="left:738px;top:136px;width:13px;height:13px;border:1px solid #8e8e8e;background:linear-gradient(135deg,#d6d6d6,#fafafa)"></div>
<div class="a" style="left:739px;top:137px;width:11px;height:11px;border:1px solid #f4f4f4"></div>
<div class="t" style="left:773px;top:138px;font-size:10.5px;color:#111">ADMIN</div>
<div class="a" style="left:1px;top:154px;width:49px;height:21px;background:#e3ebf6"></div>
<div class="a" style="left:50px;top:154px;width:820px;height:21px;background:#fff"></div>
<div class="a" style="left:0px;top:175px;width:870px;height:1px;background:#c9d6ea"></div>
<div class="a" style="left:49px;top:154px;width:1px;height:21px;background:#c9d6ea"></div>
<div class="a" style="left:129px;top:154px;width:1px;height:21px;background:#c9d6ea"></div>
<div class="a" style="left:279px;top:154px;width:1px;height:21px;background:#c9d6ea"></div>
<div class="a" style="left:359px;top:154px;width:1px;height:21px;background:#c9d6ea"></div>
<div class="a" style="left:409px;top:154px;width:1px;height:21px;background:#c9d6ea"></div>
<div class="a" style="left:459px;top:154px;width:1px;height:21px;background:#c9d6ea"></div>
<div class="a" style="left:509px;top:154px;width:1px;height:21px;background:#c9d6ea"></div>
<div class="a" style="left:569px;top:154px;width:1px;height:21px;background:#c9d6ea"></div>
<div class="a" style="left:619px;top:154px;width:1px;height:21px;background:#c9d6ea"></div>
<div class="a" style="left:669px;top:154px;width:1px;height:21px;background:#c9d6ea"></div>
<div class="a" style="left:719px;top:154px;width:1px;height:21px;background:#c9d6ea"></div>
<div class="a" style="left:769px;top:154px;width:1px;height:21px;background:#c9d6ea"></div>
<div class="a" style="left:869px;top:154px;width:1px;height:21px;background:#c9d6ea"></div>
<div class="t" style="left:1px;top:161px;width:35px;text-align:right;font-size:11px;color:#111">8</div>
<div class="t" style="left:53px;top:160px;font-size:10.5px;color:#111">11212</div>
<div class="t" style="left:133px;top:160px;font-size:10.5px;color:#111">Tiền gửi VND tại ngân hàng...</div>
<div class="t" style="left:283px;top:160px;font-size:10.5px;color:#111">112</div>
<div class="a" style="left:378px;top:158px;width:13px;height:13px;border:1px solid #8e8e8e;background:linear-gradient(135deg,#d6d6d6,#fafafa)"></div>
<div class="a" style="left:379px;top:159px;width:11px;height:11px;border:1px solid #f4f4f4"></div>
<div class="a" style="left:428px;top:158px;width:13px;height:13px;border:1px solid #8e8e8e;background:linear-gradient(135deg,#d6d6d6,#fafafa)"></div>
<div class="a" style="left:429px;top:159px;width:11px;height:11px;border:1px solid #f4f4f4"></div>
<svg style="left:430px;top:160px" width="9" height="9"><path d="M1.2 4.2 L3.6 7.6 L7.8 0.6" fill="none" stroke="#2d4f9e" stroke-width="1.6"/></svg>
<div class="a" style="left:478px;top:158px;width:13px;height:13px;border:1px solid #8e8e8e;background:linear-gradient(135deg,#d6d6d6,#fafafa)"></div>
<div class="a" style="left:479px;top:159px;width:11px;height:11px;border:1px solid #f4f4f4"></div>
<div class="a" style="left:533px;top:158px;width:13px;height:13px;border:1px solid #8e8e8e;background:linear-gradient(135deg,#d6d6d6,#fafafa)"></div>
<div class="a" style="left:534px;top:159px;width:11px;height:11px;border:1px solid #f4f4f4"></div>
<div class="a" style="left:588px;top:158px;width:13px;height:13px;border:1px solid #8e8e8e;background:linear-gradient(135deg,#d6d6d6,#fafafa)"></div>
<div class="a" style="left:589px;top:159px;width:11px;height:11px;border:1px solid #f4f4f4"></div>
<div class="a" style="left:638px;top:158px;width:13px;height:13px;border:1px solid #8e8e8e;background:linear-gradient(135deg,#d6d6d6,#fafafa)"></div>
<div class="a" style="left:639px;top:159px;width:11px;height:11px;border:1px solid #f4f4f4"></div>
<div class="a" style="left:688px;top:158px;width:13px;height:13px;border:1px solid #8e8e8e;background:linear-gradient(135deg,#d6d6d6,#fafafa)"></div>
<div class="a" style="left:689px;top:159px;width:11px;height:11px;border:1px solid #f4f4f4"></div>
<div class="a" style="left:738px;top:158px;width:13px;height:13px;border:1px solid #8e8e8e;background:linear-gradient(135deg,#d6d6d6,#fafafa)"></div>
<div class="a" style="left:739px;top:159px;width:11px;height:11px;border:1px solid #f4f4f4"></div>
<div class="t" style="left:773px;top:160px;font-size:10.5px;color:#111">TUPTC</div>
<div class="a" style="left:1px;top:176px;width:49px;height:21px;background:#e3ebf6"></div>
<div class="a" style="left:50px;top:176px;width:820px;height:21px;background:#fff"></div>
<div class="a" style="left:0px;top:197px;width:870px;height:1px;background:#c9d6ea"></div>
<div class="a" style="left:49px;top:176px;width:1px;height:21px;background:#c9d6ea"></div>
<div class="a" style="left:129px;top:176px;width:1px;height:21px;background:#c9d6ea"></div>
<div class="a" style="left:279px;top:176px;width:1px;height:21px;background:#c9d6ea"></div>
<div class="a" style="left:359px;top:176px;width:1px;height:21px;background:#c9d6ea"></div>
<div class="a" style="left:409px;top:176px;width:1px;height:21px;background:#c9d6ea"></div>
<div class="a" style="left:459px;top:176px;width:1px;height:21px;background:#c9d6ea"></div>
<div class="a" style="left:509px;top:176px;width:1px;height:21px;background:#c9d6ea"></div>
<div class="a" style="left:569px;top:176px;width:1px;height:21px;background:#c9d6ea"></div>
<div class="a" style="left:619px;top:176px;width:1px;height:21px;background:#c9d6ea"></div>
<div class="a" style="left:669px;top:176px;width:1px;height:21px;background:#c9d6ea"></div>
<div class="a" style="left:719px;top:176px;width:1px;height:21px;background:#c9d6ea"></div>
<div class="a" style="left:769px;top:176px;width:1px;height:21px;background:#c9d6ea"></div>
<div class="a" style="left:869px;top:176px;width:1px;height:21px;background:#c9d6ea"></div>
<div class="t" style="left:1px;top:183px;width:35px;text-align:right;font-size:11px;color:#111">9</div>
<div class="t" style="left:53px;top:182px;font-size:10.5px;color:#111">11213</div>
<div class="t" style="left:133px;top:182px;font-size:10.5px;color:#111">Tiền gửi VND tại Ngân hàng...</div>
<div class="t" style="left:283px;top:182px;font-size:10.5px;color:#111">1121</div>
<div class="a" style="left:378px;top:180px;width:13px;height:13px;border:1px solid #8e8e8e;background:linear-gradient(135deg,#d6d6d6,#fafafa)"></div>
<div class="a" style="left:379px;top:181px;width:11px;height:11px;border:1px solid #f4f4f4"></div>
<div class="a" style="left:428px;top:180px;width:13px;height:13px;border:1px solid #8e8e8e;background:linear-gradient(135deg,#d6d6d6,#fafafa)"></div>
<div class="a" style="left:429px;top:181px;width:11px;height:11px;border:1px solid #f4f4f4"></div>
<svg style="left:430px;top:182px" width="9" height="9"><path d="M1.2 4.2 L3.6 7.6 L7.8 0.6" fill="none" stroke="#2d4f9e" stroke-width="1.6"/></svg>
<div class="a" style="left:478px;top:180px;width:13px;height:13px;border:1px solid #8e8e8e;background:linear-gradient(135deg,#d6d6d6,#fafafa)"></div>
<div class="a" style="left:479px;top:181px;width:11px;height:11px;border:1px solid #f4f4f4"></div>
<div class="a" style="left:533px;top:180px;width:13px;height:13px;border:1px solid #8e8e8e;background:linear-gradient(135deg,#d6d6d6,#fafafa)"></div>
<div class="a" style="left:534px;top:181px;width:11px;height:11px;border:1px solid #f4f4f4"></div>
<div class="a" style="left:588px;top:180px;width:13px;height:13px;border:1px solid #8e8e8e;background:linear-gradient(135deg,#d6d6d6,#fafafa)"></div>
<div class="a" style="left:589px;top:181px;width:11px;height:11px;border:1px solid #f4f4f4"></div>
<div class="a" style="left:638px;top:180px;width:13px;height:13px;border:1px solid #8e8e8e;background:linear-gradient(135deg,#d6d6d6,#fafafa)"></div>
<div class="a" style="left:639px;top:181px;width:11px;height:11px;border:1px solid #f4f4f4"></div>
<div class="a" style="left:688px;top:180px;width:13px;height:13px;border:1px solid #8e8e8e;background:linear-gradient(135deg,#d6d6d6,#fafafa)"></div>
<div class="a" style="left:689px;top:181px;width:11px;height:11px;border:1px solid #f4f4f4"></div>
<div class="a" style="left:738px;top:180px;width:13px;height:13px;border:1px solid #8e8e8e;background:linear-gradient(135deg,#d6d6d6,#fafafa)"></div>
<div class="a" style="left:739px;top:181px;width:11px;height:11px;border:1px solid #f4f4f4"></div>
<svg style="left:740px;top:182px" width="9" height="9"><path d="M1.2 4.2 L3.6 7.6 L7.8 0.6" fill="none" stroke="#2d4f9e" stroke-width="1.6"/></svg>
<div class="t" style="left:773px;top:182px;font-size:10.5px;color:#111">TUPTC</div>
<div class="a" style="left:1px;top:198px;width:49px;height:21px;background:#e3ebf6"></div>
<div class="a" style="left:50px;top:198px;width:820px;height:21px;background:#fff"></div>
<div class="a" style="left:0px;top:219px;width:870px;height:1px;background:#c9d6ea"></div>
<div class="a" style="left:49px;top:198px;width:1px;height:21px;background:#c9d6ea"></div>
<div class="a" style="left:129px;top:198px;width:1px;height:21px;background:#c9d6ea"></div>
<div class="a" style="left:279px;top:198px;width:1px;height:21px;background:#c9d6ea"></div>
<div class="a" style="left:359px;top:198px;width:1px;height:21px;background:#c9d6ea"></div>
<div class="a" style="left:409px;top:198px;width:1px;height:21px;background:#c9d6ea"></div>
<div class="a" style="left:459px;top:198px;width:1px;height:21px;background:#c9d6ea"></div>
<div class="a" style="left:509px;top:198px;width:1px;height:21px;background:#c9d6ea"></div>
<div class="a" style="left:569px;top:198px;width:1px;height:21px;background:#c9d6ea"></div>
<div class="a" style="left:619px;top:198px;width:1px;height:21px;background:#c9d6ea"></div>
<div class="a" style="left:669px;top:198px;width:1px;height:21px;background:#c9d6ea"></div>
<div class="a" style="left:719px;top:198px;width:1px;height:21px;background:#c9d6ea"></div>
<div class="a" style="left:769px;top:198px;width:1px;height:21px;background:#c9d6ea"></div>
<div class="a" style="left:869px;top:198px;width:1px;height:21px;background:#c9d6ea"></div>
<div class="t" style="left:1px;top:205px;width:35px;text-align:right;font-size:11px;color:#111">10</div>
<div class="t" style="left:53px;top:204px;font-size:10.5px;color:#111">11214</div>
<div class="t" style="left:133px;top:204px;font-size:10.5px;color:#111">Tiền gửi VCB</div>
<div class="t" style="left:283px;top:204px;font-size:10.5px;color:#111">1121</div>
<div class="a" style="left:378px;top:202px;width:13px;height:13px;border:1px solid #8e8e8e;background:linear-gradient(135deg,#d6d6d6,#fafafa)"></div>
<div class="a" style="left:379px;top:203px;width:11px;height:11px;border:1px solid #f4f4f4"></div>
<div class="a" style="left:428px;top:202px;width:13px;height:13px;border:1px solid #8e8e8e;background:linear-gradient(135deg,#d6d6d6,#fafafa)"></div>
<div class="a" style="left:429px;top:203px;width:11px;height:11px;border:1px solid #f4f4f4"></div>
<svg style="left:430px;top:204px" width="9" height="9"><path d="M1.2 4.2 L3.6 7.6 L7.8 0.6" fill="none" stroke="#2d4f9e" stroke-width="1.6"/></svg>
<div class="a" style="left:478px;top:202px;width:13px;height:13px;border:1px solid #8e8e8e;background:linear-gradient(135deg,#d6d6d6,#fafafa)"></div>
<div class="a" style="left:479px;top:203px;width:11px;height:11px;border:1px solid #f4f4f4"></div>
<div class="a" style="left:533px;top:202px;width:13px;height:13px;border:1px solid #8e8e8e;background:linear-gradient(135deg,#d6d6d6,#fafafa)"></div>
<div class="a" style="left:534px;top:203px;width:11px;height:11px;border:1px solid #f4f4f4"></div>
<div class="a" style="left:588px;top:202px;width:13px;height:13px;border:1px solid #8e8e8e;background:linear-gradient(135deg,#d6d6d6,#fafafa)"></div>
<div class="a" style="left:589px;top:203px;width:11px;height:11px;border:1px solid #f4f4f4"></div>
<div class="a" style="left:638px;top:202px;width:13px;height:13px;border:1px solid #8e8e8e;background:linear-gradient(135deg,#d6d6d6,#fafafa)"></div>
<div class="a" style="left:639px;top:203px;width:11px;height:11px;border:1px solid #f4f4f4"></div>
<div class="a" style="left:688px;top:202px;width:13px;height:13px;border:1px solid #8e8e8e;background:linear-gradient(135deg,#d6d6d6,#fafafa)"></div>
<div class="a" style="left:689px;top:203px;width:11px;height:11px;border:1px solid #f4f4f4"></div>
<div class="a" style="left:738px;top:202px;width:13px;height:13px;border:1px solid #8e8e8e;background:linear-gradient(135deg,#d6d6d6,#fafafa)"></div>
<div class="a" style="left:739px;top:203px;width:11px;height:11px;border:1px solid #f4f4f4"></div>
<div class="t" style="left:773px;top:204px;font-size:10.5px;color:#111">ADMIN</div>
<div class="a" style="left:1px;top:220px;width:49px;height:21px;background:#e3ebf6"></div>
<div class="a" style="left:50px;top:220px;width:820px;height:21px;background:#fff"></div>
<div class="a" style="left:0px;top:241px;width:870px;height:1px;background:#c9d6ea"></div>
<div class="a" style="left:49px;top:220px;width:1px;height:21px;background:#c9d6ea"></div>
<div class="a" style="left:129px;top:220px;width:1px;height:21px;background:#c9d6ea"></div>
<div class="a" style="left:279px;top:220px;width:1px;height:21px;background:#c9d6ea"></div>
<div class="a" style="left:359px;top:220px;width:1px;height:21px;background:#c9d6ea"></div>
<div class="a" style="left:409px;top:220px;width:1px;height:21px;background:#c9d6ea"></div>
<div class="a" style="left:459px;top:220px;width:1px;height:21px;background:#c9d6ea"></div>
<div class="a" style="left:509px;top:220px;width:1px;height:21px;background:#c9d6ea"></div>
<div class="a" style="left:569px;top:220px;width:1px;height:21px;background:#c9d6ea"></div>
<div class="a" style="left:619px;top:220px;width:1px;height:21px;background:#c9d6ea"></div>
<div class="a" style="left:669px;top:220px;width:1px;height:21px;background:#c9d6ea"></div>
<div class="a" style="left:719px;top:220px;width:1px;height:21px;background:#c9d6ea"></div>
<div class="a" style="left:769px;top:220px;width:1px;height:21px;background:#c9d6ea"></div>
<div class="a" style="left:869px;top:220px;width:1px;height:21px;background:#c9d6ea"></div>
<div class="t" style="left:1px;top:227px;width:35px;text-align:right;font-size:11px;color:#111">11</div>
<div class="t" style="left:53px;top:226px;font-size:10.5px;color:#111">11215</div>
<div class="t" style="left:133px;top:226px;font-size:10.5px;color:#111">Tiền gửi EAB (Sổ)</div>
<div class="t" style="left:283px;top:226px;font-size:10.5px;color:#111">1121</div>
<div class="a" style="left:378px;top:224px;width:13px;height:13px;border:1px solid #8e8e8e;background:linear-gradient(135deg,#d6d6d6,#fafafa)"></div>
<div class="a" style="left:379px;top:225px;width:11px;height:11px;border:1px solid #f4f4f4"></div>
<div class="a" style="left:428px;top:224px;width:13px;height:13px;border:1px solid #8e8e8e;background:linear-gradient(135deg,#d6d6d6,#fafafa)"></div>
<div class="a" style="left:429px;top:225px;width:11px;height:11px;border:1px solid #f4f4f4"></div>
<svg style="left:430px;top:226px" width="9" height="9"><path d="M1.2 4.2 L3.6 7.6 L7.8 0.6" fill="none" stroke="#2d4f9e" stroke-width="1.6"/></svg>
<div class="a" style="left:478px;top:224px;width:13px;height:13px;border:1px solid #8e8e8e;background:linear-gradient(135deg,#d6d6d6,#fafafa)"></div>
<div class="a" style="left:479px;top:225px;width:11px;height:11px;border:1px solid #f4f4f4"></div>
<div class="a" style="left:533px;top:224px;width:13px;height:13px;border:1px solid #8e8e8e;background:linear-gradient(135deg,#d6d6d6,#fafafa)"></div>
<div class="a" style="left:534px;top:225px;width:11px;height:11px;border:1px solid #f4f4f4"></div>
<div class="a" style="left:588px;top:224px;width:13px;height:13px;border:1px solid #8e8e8e;background:linear-gradient(135deg,#d6d6d6,#fafafa)"></div>
<div class="a" style="left:589px;top:225px;width:11px;height:11px;border:1px solid #f4f4f4"></div>
<div class="a" style="left:638px;top:224px;width:13px;height:13px;border:1px solid #8e8e8e;background:linear-gradient(135deg,#d6d6d6,#fafafa)"></div>
<div class="a" style="left:639px;top:225px;width:11px;height:11px;border:1px solid #f4f4f4"></div>
<div class="a" style="left:688px;top:224px;width:13px;height:13px;border:1px solid #8e8e8e;background:linear-gradient(135deg,#d6d6d6,#fafafa)"></div>
<div class="a" style="left:689px;top:225px;width:11px;height:11px;border:1px solid #f4f4f4"></div>
<div class="a" style="left:738px;top:224px;width:13px;height:13px;border:1px solid #8e8e8e;background:linear-gradient(135deg,#d6d6d6,#fafafa)"></div>
<div class="a" style="left:739px;top:225px;width:11px;height:11px;border:1px solid #f4f4f4"></div>
<div class="t" style="left:773px;top:226px;font-size:10.5px;color:#111">ADMIN</div>
<div class="a" style="left:1px;top:242px;width:49px;height:21px;background:#e3ebf6"></div>
<div class="a" style="left:50px;top:242px;width:820px;height:21px;background:#fee3df"></div>
<div class="a" style="left:0px;top:263px;width:870px;height:1px;background:#c9d6ea"></div>
<div class="a" style="left:49px;top:242px;width:1px;height:21px;background:#c9d6ea"></div>
<div class="a" style="left:129px;top:242px;width:1px;height:21px;background:#c9d6ea"></div>
<div class="a" style="left:279px;top:242px;width:1px;height:21px;background:#c9d6ea"></div>
<div class="a" style="left:359px;top:242px;width:1px;height:21px;background:#c9d6ea"></div>
<div class="a" style="left:409px;top:242px;width:1px;height:21px;background:#c9d6ea"></div>
<div class="a" style="left:459px;top:242px;width:1px;height:21px;background:#c9d6ea"></div>
<div class="a" style="left:509px;top:242px;width:1px;height:21px;background:#c9d6ea"></div>
<div class="a" style="left:569px;top:242px;width:1px;height:21px;background:#c9d6ea"></div>
<div class="a" style="left:619px;top:242px;width:1px;height:21px;background:#c9d6ea"></div>
<div class="a" style="left:669px;top:242px;width:1px;height:21px;background:#c9d6ea"></div>
<div class="a" style="left:719px;top:242px;width:1px;height:21px;background:#c9d6ea"></div>
<div class="a" style="left:769px;top:242px;width:1px;height:21px;background:#c9d6ea"></div>
<div class="a" style="left:869px;top:242px;width:1px;height:21px;background:#c9d6ea"></div>
<div class="t" style="left:1px;top:249px;width:35px;text-align:right;font-size:11px;color:#111">12</div>
<div class="t" style="left:53px;top:248px;font-size:10.5px;color:#111">1122</div>
<div class="t" style="left:133px;top:248px;font-size:10.5px;color:#111">Ngoại tệ các loại</div>
<div class="t" style="left:283px;top:248px;font-size:10.5px;color:#111">112</div>
<div class="a" style="left:378px;top:246px;width:13px;height:13px;border:1px solid #8e8e8e;background:linear-gradient(135deg,#d6d6d6,#fafafa)"></div>
<div class="a" style="left:379px;top:247px;width:11px;height:11px;border:1px solid #f4f4f4"></div>
<svg style="left:380px;top:248px" width="9" height="9"><path d="M1.2 4.2 L3.6 7.6 L7.8 0.6" fill="none" stroke="#2d4f9e" stroke-width="1.6"/></svg>
<div class="a" style="left:428px;top:246px;width:13px;height:13px;border:1px solid #8e8e8e;background:linear-gradient(135deg,#d6d6d6,#fafafa)"></div>
<div class="a" style="left:429px;top:247px;width:11px;height:11px;border:1px solid #f4f4f4"></div>
<svg style="left:430px;top:248px" width="9" height="9"><path d="M1.2 4.2 L3.6 7.6 L7.8 0.6" fill="none" stroke="#2d4f9e" stroke-width="1.6"/></svg>
<div class="a" style="left:478px;top:246px;width:13px;height:13px;border:1px solid #8e8e8e;background:linear-gradient(135deg,#d6d6d6,#fafafa)"></div>
<div class="a" style="left:479px;top:247px;width:11px;height:11px;border:1px solid #f4f4f4"></div>
<div class="a" style="left:533px;top:246px;width:13px;height:13px;border:1px solid #8e8e8e;background:linear-gradient(135deg,#d6d6d6,#fafafa)"></div>
<div class="a" style="left:534px;top:247px;width:11px;height:11px;border:1px solid #f4f4f4"></div>
<div class="a" style="left:588px;top:246px;width:13px;height:13px;border:1px solid #8e8e8e;background:linear-gradient(135deg,#d6d6d6,#fafafa)"></div>
<div class="a" style="left:589px;top:247px;width:11px;height:11px;border:1px solid #f4f4f4"></div>
<div class="a" style="left:638px;top:246px;width:13px;height:13px;border:1px solid #8e8e8e;background:linear-gradient(135deg,#d6d6d6,#fafafa)"></div>
<div class="a" style="left:639px;top:247px;width:11px;height:11px;border:1px solid #f4f4f4"></div>
<div class="a" style="left:688px;top:246px;width:13px;height:13px;border:1px solid #8e8e8e;background:linear-gradient(135deg,#d6d6d6,#fafafa)"></div>
<div class="a" style="left:689px;top:247px;width:11px;height:11px;border:1px solid #f4f4f4"></div>
<div class="a" style="left:738px;top:246px;width:13px;height:13px;border:1px solid #8e8e8e;background:linear-gradient(135deg,#d6d6d6,#fafafa)"></div>
<div class="a" style="left:739px;top:247px;width:11px;height:11px;border:1px solid #f4f4f4"></div>
<div class="t" style="left:773px;top:248px;font-size:10.5px;color:#111">ADMIN</div>
<div class="a" style="left:1px;top:264px;width:49px;height:21px;background:#e3ebf6"></div>
<div class="a" style="left:50px;top:264px;width:820px;height:21px;background:#fee3df"></div>
<div class="a" style="left:0px;top:285px;width:870px;height:1px;background:#c9d6ea"></div>
<div class="a" style="left:49px;top:264px;width:1px;height:21px;background:#c9d6ea"></div>
<div class="a" style="left:129px;top:264px;width:1px;height:21px;background:#c9d6ea"></div>
<div class="a" style="left:279px;top:264px;width:1px;height:21px;background:#c9d6ea"></div>
<div class="a" style="left:359px;top:264px;width:1px;height:21px;background:#c9d6ea"></div>
<div class="a" style="left:409px;top:264px;width:1px;height:21px;background:#c9d6ea"></div>
<div class="a" style="left:459px;top:264px;width:1px;height:21px;background:#c9d6ea"></div>
<div class="a" style="left:509px;top:264px;width:1px;height:21px;background:#c9d6ea"></div>
<div class="a" style="left:569px;top:264px;width:1px;height:21px;background:#c9d6ea"></div>
<div class="a" style="left:619px;top:264px;width:1px;height:21px;background:#c9d6ea"></div>
<div class="a" style="left:669px;top:264px;width:1px;height:21px;background:#c9d6ea"></div>
<div class="a" style="left:719px;top:264px;width:1px;height:21px;background:#c9d6ea"></div>
<div class="a" style="left:769px;top:264px;width:1px;height:21px;background:#c9d6ea"></div>
<div class="a" style="left:869px;top:264px;width:1px;height:21px;background:#c9d6ea"></div>
<div class="t" style="left:1px;top:271px;width:35px;text-align:right;font-size:11px;color:#111">13</div>
<div class="t" style="left:53px;top:270px;font-size:10.5px;color:#111">113</div>
<div class="t" style="left:133px;top:270px;font-size:10.5px;color:#111">Tiền đang chuyển</div>
<div class="t" style="left:283px;top:270px;font-size:10.5px;color:#111"></div>
<div class="a" style="left:378px;top:268px;width:13px;height:13px;border:1px solid #8e8e8e;background:linear-gradient(135deg,#d6d6d6,#fafafa)"></div>
<div class="a" style="left:379px;top:269px;width:11px;height:11px;border:1px solid #f4f4f4"></div>
<svg style="left:380px;top:270px" width="9" height="9"><path d="M1.2 4.2 L3.6 7.6 L7.8 0.6" fill="none" stroke="#2d4f9e" stroke-width="1.6"/></svg>
<div class="a" style="left:428px;top:268px;width:13px;height:13px;border:1px solid #8e8e8e;background:linear-gradient(135deg,#d6d6d6,#fafafa)"></div>
<div class="a" style="left:429px;top:269px;width:11px;height:11px;border:1px solid #f4f4f4"></div>
<svg style="left:430px;top:270px" width="9" height="9"><path d="M1.2 4.2 L3.6 7.6 L7.8 0.6" fill="none" stroke="#2d4f9e" stroke-width="1.6"/></svg>
<div class="a" style="left:478px;top:268px;width:13px;height:13px;border:1px solid #8e8e8e;background:linear-gradient(135deg,#d6d6d6,#fafafa)"></div>
<div class="a" style="left:479px;top:269px;width:11px;height:11px;border:1px solid #f4f4f4"></div>
<div class="a" style="left:533px;top:268px;width:13px;height:13px;border:1px solid #8e8e8e;background:linear-gradient(135deg,#d6d6d6,#fafafa)"></div>
<div class="a" style="left:534px;top:269px;width:11px;height:11px;border:1px solid #f4f4f4"></div>
<div class="a" style="left:588px;top:268px;width:13px;height:13px;border:1px solid #8e8e8e;background:linear-gradient(135deg,#d6d6d6,#fafafa)"></div>
<div class="a" style="left:589px;top:269px;width:11px;height:11px;border:1px solid #f4f4f4"></div>
<div class="a" style="left:638px;top:268px;width:13px;height:13px;border:1px solid #8e8e8e;background:linear-gradient(135deg,#d6d6d6,#fafafa)"></div>
<div class="a" style="left:639px;top:269px;width:11px;height:11px;border:1px solid #f4f4f4"></div>
<div class="a" style="left:688px;top:268px;width:13px;height:13px;border:1px solid #8e8e8e;background:linear-gradient(135deg,#d6d6d6,#fafafa)"></div>
<div class="a" style="left:689px;top:269px;width:11px;height:11px;border:1px solid #f4f4f4"></div>
<div class="a" style="left:738px;top:268px;width:13px;height:13px;border:1px solid #8e8e8e;background:linear-gradient(135deg,#d6d6d6,#fafafa)"></div>
<div class="a" style="left:739px;top:269px;width:11px;height:11px;border:1px solid #f4f4f4"></div>
<div class="t" style="left:773px;top:270px;font-size:10.5px;color:#111">ADMIN</div>
<div class="a" style="left:1px;top:286px;width:49px;height:21px;background:#e3ebf6"></div>
<div class="a" style="left:50px;top:286px;width:820px;height:21px;background:#fff"></div>
<div class="a" style="left:0px;top:307px;width:870px;height:1px;background:#c9d6ea"></div>
<div class="a" style="left:49px;top:286px;width:1px;height:21px;background:#c9d6ea"></div>
<div class="a" style="left:129px;top:286px;width:1px;height:21px;background:#c9d6ea"></div>
<div class="a" style="left:279px;top:286px;width:1px;height:21px;background:#c9d6ea"></div>
<div class="a" style="left:359px;top:286px;width:1px;height:21px;background:#c9d6ea"></div>
<div class="a" style="left:409px;top:286px;width:1px;height:21px;background:#c9d6ea"></div>
<div class="a" style="left:459px;top:286px;width:1px;height:21px;background:#c9d6ea"></div>
<div class="a" style="left:509px;top:286px;width:1px;height:21px;background:#c9d6ea"></div>
<div class="a" style="left:569px;top:286px;width:1px;height:21px;background:#c9d6ea"></div>
<div class="a" style="left:619px;top:286px;width:1px;height:21px;background:#c9d6ea"></div>
<div class="a" style="left:669px;top:286px;width:1px;height:21px;background:#c9d6ea"></div>
<div class="a" style="left:719px;top:286px;width:1px;height:21px;background:#c9d6ea"></div>
<div class="a" style="left:769px;top:286px;width:1px;height:21px;background:#c9d6ea"></div>
<div class="a" style="left:869px;top:286px;width:1px;height:21px;background:#c9d6ea"></div>
<div class="t" style="left:1px;top:293px;width:35px;text-align:right;font-size:11px;color:#111">14</div>
<div class="t" style="left:53px;top:292px;font-size:10.5px;color:#111">1131</div>
<div class="t" style="left:133px;top:292px;font-size:10.5px;color:#111">Tiền VNĐ</div>
<div class="t" style="left:283px;top:292px;font-size:10.5px;color:#111">113</div>
<div class="a" style="left:378px;top:290px;width:13px;height:13px;border:1px solid #8e8e8e;background:linear-gradient(135deg,#d6d6d6,#fafafa)"></div>
<div class="a" style="left:379px;top:291px;width:11px;height:11px;border:1px solid #f4f4f4"></div>
<div class="a" style="left:428px;top:290px;width:13px;height:13px;border:1px solid #8e8e8e;background:linear-gradient(135deg,#d6d6d6,#fafafa)"></div>
<div class="a" style="left:429px;top:291px;width:11px;height:11px;border:1px solid #f4f4f4"></div>
<svg style="left:430px;top:292px" width="9" height="9"><path d="M1.2 4.2 L3.6 7.6 L7.8 0.6" fill="none" stroke="#2d4f9e" stroke-width="1.6"/></svg>
<div class="a" style="left:478px;top:290px;width:13px;height:13px;border:1px solid #8e8e8e;background:linear-gradient(135deg,#d6d6d6,#fafafa)"></div>
<div class="a" style="left:479px;top:291px;width:11px;height:11px;border:1px solid #f4f4f4"></div>
<div class="a" style="left:533px;top:290px;width:13px;height:13px;border:1px solid #8e8e8e;background:linear-gradient(135deg,#d6d6d6,#fafafa)"></div>
<div class="a" style="left:534px;top:291px;width:11px;height:11px;border:1px solid #f4f4f4"></div>
<div class="a" style="left:588px;top:290px;width:13px;height:13px;border:1px solid #8e8e8e;background:linear-gradient(135deg,#d6d6d6,#fafafa)"></div>
<div class="a" style="left:589px;top:291px;width:11px;height:11px;border:1px solid #f4f4f4"></div>
<div class="a" style="left:638px;top:290px;width:13px;height:13px;border:1px solid #8e8e8e;background:linear-gradient(135deg,#d6d6d6,#fafafa)"></div>
<div class="a" style="left:639px;top:291px;width:11px;height:11px;border:1px solid #f4f4f4"></div>
<div class="a" style="left:688px;top:290px;width:13px;height:13px;border:1px solid #8e8e8e;background:linear-gradient(135deg,#d6d6d6,#fafafa)"></div>
<div class="a" style="left:689px;top:291px;width:11px;height:11px;border:1px solid #f4f4f4"></div>
<div class="a" style="left:738px;top:290px;width:13px;height:13px;border:1px solid #8e8e8e;background:linear-gradient(135deg,#d6d6d6,#fafafa)"></div>
<div class="a" style="left:739px;top:291px;width:11px;height:11px;border:1px solid #f4f4f4"></div>
<div class="t" style="left:773px;top:292px;font-size:10.5px;color:#111">ADMIN</div>
<div class="a" style="left:1px;top:308px;width:49px;height:21px;background:#e3ebf6"></div>
<div class="a" style="left:50px;top:308px;width:820px;height:21px;background:#fee3df"></div>
<div class="a" style="left:0px;top:329px;width:870px;height:1px;background:#c9d6ea"></div>
<div class="a" style="left:49px;top:308px;width:1px;height:21px;background:#c9d6ea"></div>
<div class="a" style="left:129px;top:308px;width:1px;height:21px;background:#c9d6ea"></div>
<div class="a" style="left:279px;top:308px;width:1px;height:21px;background:#c9d6ea"></div>
<div class="a" style="left:359px;top:308px;width:1px;height:21px;background:#c9d6ea"></div>
<div class="a" style="left:409px;top:308px;width:1px;height:21px;background:#c9d6ea"></div>
<div class="a" style="left:459px;top:308px;width:1px;height:21px;background:#c9d6ea"></div>
<div class="a" style="left:509px;top:308px;width:1px;height:21px;background:#c9d6ea"></div>
<div class="a" style="left:569px;top:308px;width:1px;height:21px;background:#c9d6ea"></div>
<div class="a" style="left:619px;top:308px;width:1px;height:21px;background:#c9d6ea"></div>
<div class="a" style="left:669px;top:308px;width:1px;height:21px;background:#c9d6ea"></div>
<div class="a" style="left:719px;top:308px;width:1px;height:21px;background:#c9d6ea"></div>
<div class="a" style="left:769px;top:308px;width:1px;height:21px;background:#c9d6ea"></div>
<div class="a" style="left:869px;top:308px;width:1px;height:21px;background:#c9d6ea"></div>
<div class="t" style="left:1px;top:315px;width:35px;text-align:right;font-size:11px;color:#111">15</div>
<div class="t" style="left:53px;top:314px;font-size:10.5px;color:#111">121</div>
<div class="t" style="left:133px;top:314px;font-size:10.5px;color:#111">Đầu tư chứng khoán ngắn ...</div>
<div class="t" style="left:283px;top:314px;font-size:10.5px;color:#111"></div>
<div class="a" style="left:378px;top:312px;width:13px;height:13px;border:1px solid #8e8e8e;background:linear-gradient(135deg,#d6d6d6,#fafafa)"></div>
<div class="a" style="left:379px;top:313px;width:11px;height:11px;border:1px solid #f4f4f4"></div>
<svg style="left:380px;top:314px" width="9" height="9"><path d="M1.2 4.2 L3.6 7.6 L7.8 0.6" fill="none" stroke="#2d4f9e" stroke-width="1.6"/></svg>
<div class="a" style="left:428px;top:312px;width:13px;height:13px;border:1px solid #8e8e8e;background:linear-gradient(135deg,#d6d6d6,#fafafa)"></div>
<div class="a" style="left:429px;top:313px;width:11px;height:11px;border:1px solid #f4f4f4"></div>
<div class="a" style="left:478px;top:312px;width:13px;height:13px;border:1px solid #8e8e8e;background:linear-gradient(135deg,#d6d6d6,#fafafa)"></div>
<div class="a" style="left:479px;top:313px;width:11px;height:11px;border:1px solid #f4f4f4"></div>
<div class="a" style="left:533px;top:312px;width:13px;height:13px;border:1px solid #8e8e8e;background:linear-gradient(135deg,#d6d6d6,#fafafa)"></div>
<div class="a" style="left:534px;top:313px;width:11px;height:11px;border:1px solid #f4f4f4"></div>
<div class="a" style="left:588px;top:312px;width:13px;height:13px;border:1px solid #8e8e8e;background:linear-gradient(135deg,#d6d6d6,#fafafa)"></div>
<div class="a" style="left:589px;top:313px;width:11px;height:11px;border:1px solid #f4f4f4"></div>
<div class="a" style="left:638px;top:312px;width:13px;height:13px;border:1px solid #8e8e8e;background:linear-gradient(135deg,#d6d6d6,#fafafa)"></div>
<div class="a" style="left:639px;top:313px;width:11px;height:11px;border:1px solid #f4f4f4"></div>
<div class="a" style="left:688px;top:312px;width:13px;height:13px;border:1px solid #8e8e8e;background:linear-gradient(135deg,#d6d6d6,#fafafa)"></div>
<div class="a" style="left:689px;top:313px;width:11px;height:11px;border:1px solid #f4f4f4"></div>
<div class="a" style="left:738px;top:312px;width:13px;height:13px;border:1px solid #8e8e8e;background:linear-gradient(135deg,#d6d6d6,#fafafa)"></div>
<div class="a" style="left:739px;top:313px;width:11px;height:11px;border:1px solid #f4f4f4"></div>
<div class="t" style="left:773px;top:314px;font-size:10.5px;color:#111">ADMIN</div>
<div class="a" style="left:1px;top:330px;width:49px;height:21px;background:#e3ebf6"></div>
<div class="a" style="left:50px;top:330px;width:820px;height:21px;background:#fff"></div>
<div class="a" style="left:0px;top:351px;width:870px;height:1px;background:#c9d6ea"></div>
<div class="a" style="left:49px;top:330px;width:1px;height:21px;background:#c9d6ea"></div>
<div class="a" style="left:129px;top:330px;width:1px;height:21px;background:#c9d6ea"></div>
<div class="a" style="left:279px;top:330px;width:1px;height:21px;background:#c9d6ea"></div>
<div class="a" style="left:359px;top:330px;width:1px;height:21px;background:#c9d6ea"></div>
<div class="a" style="left:409px;top:330px;width:1px;height:21px;background:#c9d6ea"></div>
<div class="a" style="left:459px;top:330px;width:1px;height:21px;background:#c9d6ea"></div>
<div class="a" style="left:509px;top:330px;width:1px;height:21px;background:#c9d6ea"></div>
<div class="a" style="left:569px;top:330px;width:1px;height:21px;background:#c9d6ea"></div>
<div class="a" style="left:619px;top:330px;width:1px;height:21px;background:#c9d6ea"></div>
<div class="a" style="left:669px;top:330px;width:1px;height:21px;background:#c9d6ea"></div>
<div class="a" style="left:719px;top:330px;width:1px;height:21px;background:#c9d6ea"></div>
<div class="a" style="left:769px;top:330px;width:1px;height:21px;background:#c9d6ea"></div>
<div class="a" style="left:869px;top:330px;width:1px;height:21px;background:#c9d6ea"></div>
<div class="t" style="left:1px;top:337px;width:35px;text-align:right;font-size:11px;color:#111">16</div>
<div class="t" style="left:53px;top:336px;font-size:10.5px;color:#111">1211</div>
<div class="t" style="left:133px;top:336px;font-size:10.5px;color:#111">Đầu tư chứng khoán ngắn ...</div>
<div class="t" style="left:283px;top:336px;font-size:10.5px;color:#111">121</div>
<div class="a" style="left:378px;top:334px;width:13px;height:13px;border:1px solid #8e8e8e;background:linear-gradient(135deg,#d6d6d6,#fafafa)"></div>
<div class="a" style="left:379px;top:335px;width:11px;height:11px;border:1px solid #f4f4f4"></div>
<div class="a" style="left:428px;top:334px;width:13px;height:13px;border:1px solid #8e8e8e;background:linear-gradient(135deg,#d6d6d6,#fafafa)"></div>
<div class="a" style="left:429px;top:335px;width:11px;height:11px;border:1px solid #f4f4f4"></div>
<div class="a" style="left:478px;top:334px;width:13px;height:13px;border:1px solid #8e8e8e;background:linear-gradient(135deg,#d6d6d6,#fafafa)"></div>
<div class="a" style="left:479px;top:335px;width:11px;height:11px;border:1px solid #f4f4f4"></div>
<div class="a" style="left:533px;top:334px;width:13px;height:13px;border:1px solid #8e8e8e;background:linear-gradient(135deg,#d6d6d6,#fafafa)"></div>
<div class="a" style="left:534px;top:335px;width:11px;height:11px;border:1px solid #f4f4f4"></div>
<div class="a" style="left:588px;top:334px;width:13px;height:13px;border:1px solid #8e8e8e;background:linear-gradient(135deg,#d6d6d6,#fafafa)"></div>
<div class="a" style="left:589px;top:335px;width:11px;height:11px;border:1px solid #f4f4f4"></div>
<div class="a" style="left:638px;top:334px;width:13px;height:13px;border:1px solid #8e8e8e;background:linear-gradient(135deg,#d6d6d6,#fafafa)"></div>
<div class="a" style="left:639px;top:335px;width:11px;height:11px;border:1px solid #f4f4f4"></div>
<div class="a" style="left:688px;top:334px;width:13px;height:13px;border:1px solid #8e8e8e;background:linear-gradient(135deg,#d6d6d6,#fafafa)"></div>
<div class="a" style="left:689px;top:335px;width:11px;height:11px;border:1px solid #f4f4f4"></div>
<div class="a" style="left:738px;top:334px;width:13px;height:13px;border:1px solid #8e8e8e;background:linear-gradient(135deg,#d6d6d6,#fafafa)"></div>
<div class="a" style="left:739px;top:335px;width:11px;height:11px;border:1px solid #f4f4f4"></div>
<div class="t" style="left:773px;top:336px;font-size:10.5px;color:#111">ADMIN</div>
<div class="a" style="left:1px;top:352px;width:49px;height:21px;background:#e3ebf6"></div>
<div class="a" style="left:50px;top:352px;width:820px;height:21px;background:#fff"></div>
<div class="a" style="left:0px;top:373px;width:870px;height:1px;background:#c9d6ea"></div>
<div class="a" style="left:49px;top:352px;width:1px;height:21px;background:#c9d6ea"></div>
<div class="a" style="left:129px;top:352px;width:1px;height:21px;background:#c9d6ea"></div>
<div class="a" style="left:279px;top:352px;width:1px;height:21px;background:#c9d6ea"></div>
<div class="a" style="left:359px;top:352px;width:1px;height:21px;background:#c9d6ea"></div>
<div class="a" style="left:409px;top:352px;width:1px;height:21px;background:#c9d6ea"></div>
<div class="a" style="left:459px;top:352px;width:1px;height:21px;background:#c9d6ea"></div>
<div class="a" style="left:509px;top:352px;width:1px;height:21px;background:#c9d6ea"></div>
<div class="a" style="left:569px;top:352px;width:1px;height:21px;background:#c9d6ea"></div>
<div class="a" style="left:619px;top:352px;width:1px;height:21px;background:#c9d6ea"></div>
<div class="a" style="left:669px;top:352px;width:1px;height:21px;background:#c9d6ea"></div>
<div class="a" style="left:719px;top:352px;width:1px;height:21px;background:#c9d6ea"></div>
<div class="a" style="left:769px;top:352px;width:1px;height:21px;background:#c9d6ea"></div>
<div class="a" style="left:869px;top:352px;width:1px;height:21px;background:#c9d6ea"></div>
<div class="t" style="left:1px;top:359px;width:35px;text-align:right;font-size:11px;color:#111">17</div>
<div class="t" style="left:53px;top:358px;font-size:10.5px;color:#111">1212</div>
<div class="t" style="left:133px;top:358px;font-size:10.5px;color:#111">Đầu tư chứng khoán ngắn ...</div>
<div class="t" style="left:283px;top:358px;font-size:10.5px;color:#111">121</div>
<div class="a" style="left:378px;top:356px;width:13px;height:13px;border:1px solid #8e8e8e;background:linear-gradient(135deg,#d6d6d6,#fafafa)"></div>
<div class="a" style="left:379px;top:357px;width:11px;height:11px;border:1px solid #f4f4f4"></div>
<div class="a" style="left:428px;top:356px;width:13px;height:13px;border:1px solid #8e8e8e;background:linear-gradient(135deg,#d6d6d6,#fafafa)"></div>
<div class="a" style="left:429px;top:357px;width:11px;height:11px;border:1px solid #f4f4f4"></div>
<div class="a" style="left:478px;top:356px;width:13px;height:13px;border:1px solid #8e8e8e;background:linear-gradient(135deg,#d6d6d6,#fafafa)"></div>
<div class="a" style="left:479px;top:357px;width:11px;height:11px;border:1px solid #f4f4f4"></div>
<div class="a" style="left:533px;top:356px;width:13px;height:13px;border:1px solid #8e8e8e;background:linear-gradient(135deg,#d6d6d6,#fafafa)"></div>
<div class="a" style="left:534px;top:357px;width:11px;height:11px;border:1px solid #f4f4f4"></div>
<div class="a" style="left:588px;top:356px;width:13px;height:13px;border:1px solid #8e8e8e;background:linear-gradient(135deg,#d6d6d6,#fafafa)"></div>
<div class="a" style="left:589px;top:357px;width:11px;height:11px;border:1px solid #f4f4f4"></div>
<div class="a" style="left:638px;top:356px;width:13px;height:13px;border:1px solid #8e8e8e;background:linear-gradient(135deg,#d6d6d6,#fafafa)"></div>
<div class="a" style="left:639px;top:357px;width:11px;height:11px;border:1px solid #f4f4f4"></div>
<div class="a" style="left:688px;top:356px;width:13px;height:13px;border:1px solid #8e8e8e;background:linear-gradient(135deg,#d6d6d6,#fafafa)"></div>
<div class="a" style="left:689px;top:357px;width:11px;height:11px;border:1px solid #f4f4f4"></div>
<div class="a" style="left:738px;top:356px;width:13px;height:13px;border:1px solid #8e8e8e;background:linear-gradient(135deg,#d6d6d6,#fafafa)"></div>
<div class="a" style="left:739px;top:357px;width:11px;height:11px;border:1px solid #f4f4f4"></div>
<div class="t" style="left:773px;top:358px;font-size:10.5px;color:#111">ADMIN</div>
<div class="a" style="left:1px;top:374px;width:49px;height:21px;background:#e3ebf6"></div>
<div class="a" style="left:50px;top:374px;width:820px;height:21px;background:#fee3df"></div>
<div class="a" style="left:0px;top:395px;width:870px;height:1px;background:#c9d6ea"></div>
<div class="a" style="left:49px;top:374px;width:1px;height:21px;background:#c9d6ea"></div>
<div class="a" style="left:129px;top:374px;width:1px;height:21px;background:#c9d6ea"></div>
<div class="a" style="left:279px;top:374px;width:1px;height:21px;background:#c9d6ea"></div>
<div class="a" style="left:359px;top:374px;width:1px;height:21px;background:#c9d6ea"></div>
<div class="a" style="left:409px;top:374px;width:1px;height:21px;background:#c9d6ea"></div>
<div class="a" style="left:459px;top:374px;width:1px;height:21px;background:#c9d6ea"></div>
<div class="a" style="left:509px;top:374px;width:1px;height:21px;background:#c9d6ea"></div>
<div class="a" style="left:569px;top:374px;width:1px;height:21px;background:#c9d6ea"></div>
<div class="a" style="left:619px;top:374px;width:1px;height:21px;background:#c9d6ea"></div>
<div class="a" style="left:669px;top:374px;width:1px;height:21px;background:#c9d6ea"></div>
<div class="a" style="left:719px;top:374px;width:1px;height:21px;background:#c9d6ea"></div>
<div class="a" style="left:769px;top:374px;width:1px;height:21px;background:#c9d6ea"></div>
<div class="a" style="left:869px;top:374px;width:1px;height:21px;background:#c9d6ea"></div>
<div class="t" style="left:1px;top:381px;width:35px;text-align:right;font-size:11px;color:#111">18</div>
<div class="t" style="left:53px;top:380px;font-size:10.5px;color:#111">128</div>
<div class="t" style="left:133px;top:380px;font-size:10.5px;color:#111">Đầu tư ngắn hạn khác</div>
<div class="t" style="left:283px;top:380px;font-size:10.5px;color:#111"></div>
<div class="a" style="left:378px;top:378px;width:13px;height:13px;border:1px solid #8e8e8e;background:linear-gradient(135deg,#d6d6d6,#fafafa)"></div>
<div class="a" style="left:379px;top:379px;width:11px;height:11px;border:1px solid #f4f4f4"></div>
<svg style="left:380px;top:380px" width="9" height="9"><path d="M1.2 4.2 L3.6 7.6 L7.8 0.6" fill="none" stroke="#2d4f9e" stroke-width="1.6"/></svg>
<div class="a" style="left:428px;top:378px;width:13px;height:13px;border:1px solid #8e8e8e;background:linear-gradient(135deg,#d6d6d6,#fafafa)"></div>
<div class="a" style="left:429px;top:379px;width:11px;height:11px;border:1px solid #f4f4f4"></div>
<div class="a" style="left:478px;top:378px;width:13px;height:13px;border:1px solid #8e8e8e;background:linear-gradient(135deg,#d6d6d6,#fafafa)"></div>
<div class="a" style="left:479px;top:379px;width:11px;height:11px;border:1px solid #f4f4f4"></div>
<div class="a" style="left:533px;top:378px;width:13px;height:13px;border:1px solid #8e8e8e;background:linear-gradient(135deg,#d6d6d6,#fafafa)"></div>
<div class="a" style="left:534px;top:379px;width:11px;height:11px;border:1px solid #f4f4f4"></div>
<div class="a" style="left:588px;top:378px;width:13px;height:13px;border:1px solid #8e8e8e;background:linear-gradient(135deg,#d6d6d6,#fafafa)"></div>
<div class="a" style="left:589px;top:379px;width:11px;height:11px;border:1px solid #f4f4f4"></div>
<div class="a" style="left:638px;top:378px;width:13px;height:13px;border:1px solid #8e8e8e;background:linear-gradient(135deg,#d6d6d6,#fafafa)"></div>
<div class="a" style="left:639px;top:379px;width:11px;height:11px;border:1px solid #f4f4f4"></div>
<div class="a" style="left:688px;top:378px;width:13px;height:13px;border:1px solid #8e8e8e;background:linear-gradient(135deg,#d6d6d6,#fafafa)"></div>
<div class="a" style="left:689px;top:379px;width:11px;height:11px;border:1px solid #f4f4f4"></div>
<div class="a" style="left:738px;top:378px;width:13px;height:13px;border:1px solid #8e8e8e;background:linear-gradient(135deg,#d6d6d6,#fafafa)"></div>
<div class="a" style="left:739px;top:379px;width:11px;height:11px;border:1px solid #f4f4f4"></div>
<div class="t" style="left:773px;top:380px;font-size:10.5px;color:#111">ADMIN</div>
<div class="a" style="left:1px;top:396px;width:49px;height:21px;background:#e3ebf6"></div>
<div class="a" style="left:50px;top:396px;width:820px;height:21px;background:#fff"></div>
<div class="a" style="left:0px;top:417px;width:870px;height:1px;background:#c9d6ea"></div>
<div class="a" style="left:49px;top:396px;width:1px;height:21px;background:#c9d6ea"></div>
<div class="a" style="left:129px;top:396px;width:1px;height:21px;background:#c9d6ea"></div>
<div class="a" style="left:279px;top:396px;width:1px;height:21px;background:#c9d6ea"></div>
<div class="a" style="left:359px;top:396px;width:1px;height:21px;background:#c9d6ea"></div>
<div class="a" style="left:409px;top:396px;width:1px;height:21px;background:#c9d6ea"></div>
<div class="a" style="left:459px;top:396px;width:1px;height:21px;background:#c9d6ea"></div>
<div class="a" style="left:509px;top:396px;width:1px;height:21px;background:#c9d6ea"></div>
<div class="a" style="left:569px;top:396px;width:1px;height:21px;background:#c9d6ea"></div>
<div class="a" style="left:619px;top:396px;width:1px;height:21px;background:#c9d6ea"></div>
<div class="a" style="left:669px;top:396px;width:1px;height:21px;background:#c9d6ea"></div>
<div class="a" style="left:719px;top:396px;width:1px;height:21px;background:#c9d6ea"></div>
<div class="a" style="left:769px;top:396px;width:1px;height:21px;background:#c9d6ea"></div>
<div class="a" style="left:869px;top:396px;width:1px;height:21px;background:#c9d6ea"></div>
<div class="t" style="left:1px;top:403px;width:35px;text-align:right;font-size:11px;color:#111">19</div>
<div class="t" style="left:53px;top:402px;font-size:10.5px;color:#111">1281</div>
<div class="t" style="left:133px;top:402px;font-size:10.5px;color:#111">Tiền gửi có kỳ hạn</div>
<div class="t" style="left:283px;top:402px;font-size:10.5px;color:#111">128</div>
<div class="a" style="left:378px;top:400px;width:13px;height:13px;border:1px solid #8e8e8e;background:linear-gradient(135deg,#d6d6d6,#fafafa)"></div>
<div class="a" style="left:379px;top:401px;width:11px;height:11px;border:1px solid #f4f4f4"></div>
<div class="a" style="left:428px;top:400px;width:13px;height:13px;border:1px solid #8e8e8e;background:linear-gradient(135deg,#d6d6d6,#fafafa)"></div>
<div class="a" style="left:429px;top:401px;width:11px;height:11px;border:1px solid #f4f4f4"></div>
<div class="a" style="left:478px;top:400px;width:13px;height:13px;border:1px solid #8e8e8e;background:linear-gradient(135deg,#d6d6d6,#fafafa)"></div>
<div class="a" style="left:479px;top:401px;width:11px;height:11px;border:1px solid #f4f4f4"></div>
<div class="a" style="left:533px;top:400px;width:13px;height:13px;border:1px solid #8e8e8e;background:linear-gradient(135deg,#d6d6d6,#fafafa)"></div>
<div class="a" style="left:534px;top:401px;width:11px;height:11px;border:1px solid #f4f4f4"></div>
<div class="a" style="left:588px;top:400px;width:13px;height:13px;border:1px solid #8e8e8e;background:linear-gradient(135deg,#d6d6d6,#fafafa)"></div>
<div class="a" style="left:589px;top:401px;width:11px;height:11px;border:1px solid #f4f4f4"></div>
<div class="a" style="left:638px;top:400px;width:13px;height:13px;border:1px solid #8e8e8e;background:linear-gradient(135deg,#d6d6d6,#fafafa)"></div>
<div class="a" style="left:639px;top:401px;width:11px;height:11px;border:1px solid #f4f4f4"></div>
<div class="a" style="left:688px;top:400px;width:13px;height:13px;border:1px solid #8e8e8e;background:linear-gradient(135deg,#d6d6d6,#fafafa)"></div>
<div class="a" style="left:689px;top:401px;width:11px;height:11px;border:1px solid #f4f4f4"></div>
<div class="a" style="left:738px;top:400px;width:13px;height:13px;border:1px solid #8e8e8e;background:linear-gradient(135deg,#d6d6d6,#fafafa)"></div>
<div class="a" style="left:739px;top:401px;width:11px;height:11px;border:1px solid #f4f4f4"></div>
<div class="t" style="left:773px;top:402px;font-size:10.5px;color:#111">ADMIN</div>
</div>
<div class="a" style="left:1344px;top:273px;width:17px;height:424px;background:linear-gradient(90deg,#b9d3f3 0px,#b9d3f3 1px,#a3bfe4 2px,#88a8d4 60%,#7c9dcb)"></div>
<svg style="left:1348px;top:278px" width="10" height="5"><path d="M0 5 L5 0 L10 5 Z" fill="#4b5a80"/></svg>
<div class="a" style="left:1344px;top:291px;width:17px;height:30px;border:1px solid #5b6d95;border-radius:2px;background:linear-gradient(90deg,#eef1f5,#e2e7ee 45%,#c5cfdc 55%,#d8e0ea)"></div>
<div class="a" style="left:1348px;top:302px;width:9px;height:1px;background:#8a94a6"></div>
<div class="a" style="left:1348px;top:304px;width:9px;height:1px;background:#8a94a6"></div>
<div class="a" style="left:1348px;top:306px;width:9px;height:1px;background:#8a94a6"></div>
<div class="a" style="left:1348px;top:308px;width:9px;height:1px;background:#8a94a6"></div>
<svg style="left:1348px;top:687px" width="10" height="5"><path d="M0 0 L5 5 L10 0 Z" fill="#4b5a80"/></svg>
<div class="a" style="left:0px;top:701px;width:1366px;height:1px;background:#9aa8b8"></div>
<div class="a" style="left:0px;top:702px;width:1366px;height:1px;background:#6d8fbc"></div>
<div class="a" style="left:0px;top:703px;width:1366px;height:25px;background:linear-gradient(#f6f9fe 0px,#f6f9fe 1px,#d5e4f8 1px,#d1e2f7 9px,#b9d3f2 9px,#c2d8f4 17px,#d0e1f7 25px)"></div>
<svg style="left:5px;top:710px" width="14" height="12" viewBox="0 0 15 12"><path d="M0.5 3.5 H7 V0.5 L14.5 6 L7 11.5 V8.5 H0.5 Z" fill="#5ed430" stroke="#2e8a1a"/></svg>
<div class="a" style="left:28px;top:709px;width:1px;height:16px;background:#fbfdff"></div>
<div class="a" style="left:961px;top:709px;width:1px;height:16px;background:#fbfdff"></div>
<div class="a" style="left:1067px;top:709px;width:1px;height:16px;background:#fbfdff"></div>
<div class="a" style="left:1137px;top:709px;width:1px;height:16px;background:#fbfdff"></div>
<div class="a" style="left:1184px;top:709px;width:1px;height:16px;background:#fbfdff"></div>
<div class="a" style="left:1291px;top:709px;width:1px;height:16px;background:#fbfdff"></div>
<svg style="left:1071px;top:708px" width="17" height="15" viewBox="0 0 17 15"><circle cx="5.5" cy="4" r="2.8" fill="#f2b048"/><path d="M2.6 3.5 Q3 0.5 5.5 0.8 Q8.3 0.8 8.4 3.5 Q6 2 2.6 3.5Z" fill="#3a3a3a"/><path d="M0.5 11.5 Q0.5 7.5 5.5 7.5 Q8.5 7.5 9.5 9.5 V11.5 Z" fill="#40b030"/><circle cx="10.5" cy="8" r="2.8" fill="#f4b450"/><path d="M7.5 9.5 Q7 4.5 10.5 4.6 Q14 4.5 13.6 9.5 L12.6 7 Q10.5 6 8.6 7 Z" fill="#2a2a2a"/><path d="M5.5 15 Q5.5 11 10.5 11 Q15.5 11 15.5 15 Z" fill="#ea5a28"/></svg>
<div class="t" style="left:1090px;top:711px;font-size:12px;color:#1e3a8a">ADMIN</div>
<svg style="left:1144px;top:708px" width="13" height="16" viewBox="0 0 13 16"><path d="M1 2 L4 0.5 H12 V13 L9 14.5 H1 Z" fill="#a8a0d8" stroke="#6a64a0" stroke-width="0.8"/><path d="M1 2 H9 V14.5 M9 2 L12 0.5" fill="none" stroke="#6a64a0" stroke-width="0.6"/><rect x="10" y="8" width="1" height="1" fill="#f0d040"/><circle cx="5" cy="11.5" r="3.8" fill="#3cb43c" stroke="#fff" stroke-width="0.6"/><path d="M3 11.5 L4.6 13.1 L7.2 10.1" fill="none" stroke="#fff" stroke-width="1.3"/></svg>
<div class="t" style="left:1160px;top:711px;font-size:12px;color:#1e3a8a">TP</div>
<svg style="left:1189px;top:708px" width="16" height="16" viewBox="0 0 16 16"><path d="M5 2.5 V13.5 Q10 16 15 13.5 V2.5" fill="#eab020" stroke="#a87810" stroke-width="0.8"/><ellipse cx="10" cy="2.5" rx="5" ry="2" fill="#ffe680" stroke="#a87810" stroke-width="0.8"/><path d="M0.5 8 H5 L7 10 V15.5 H0.5 Z" fill="#fff" stroke="#5a6a90" stroke-width="0.8"/><path d="M3 6.5 H6.5 L8.5 8.5 V14 H3" fill="#fff" stroke="#5a6a90" stroke-width="0.8"/><path d="M4 10 H7 M4 12 H7" stroke="#6a7ab0"/></svg>
<div class="t" style="left:1207px;top:711px;font-size:12px;color:#1e3a8a">JUNSKY.ERP</div>
<svg style="left:1296px;top:707px" width="16" height="17" viewBox="0 0 16 17"><circle cx="6" cy="6" r="5.5" fill="#4aa84a"/><path d="M2 4 Q5 2 6 5 Q8 8 4 10" fill="#2a7ad0"/><rect x="5" y="5.5" width="10" height="8" fill="#2a8ae8" stroke="#406090"/><rect x="8" y="13.5" width="4" height="2.5" fill="#90a0b8"/></svg>
<div class="t" style="left:1314px;top:711px;font-size:12px;color:#1e3a8a">JUNSKY</div>
<svg style="left:0px;top:0px" width="1366" height="728"><path d="M494 97.5 L640 62.8 L640 67.6 Z" fill="#dfe9f6" stroke="#1f4b86" stroke-width="1.6" stroke-linejoin="miter"/></svg>
<div class="a" style="left:633px;top:51px;width:226px;height:37px;background:#fff;border:2px solid #1f4b86;border-radius:14px/16px"></div>
<div class="t" style="left:653px;top:61px;font-size:15.5px;color:#222">Click để sửa mã tài khoản</div></body></html>
